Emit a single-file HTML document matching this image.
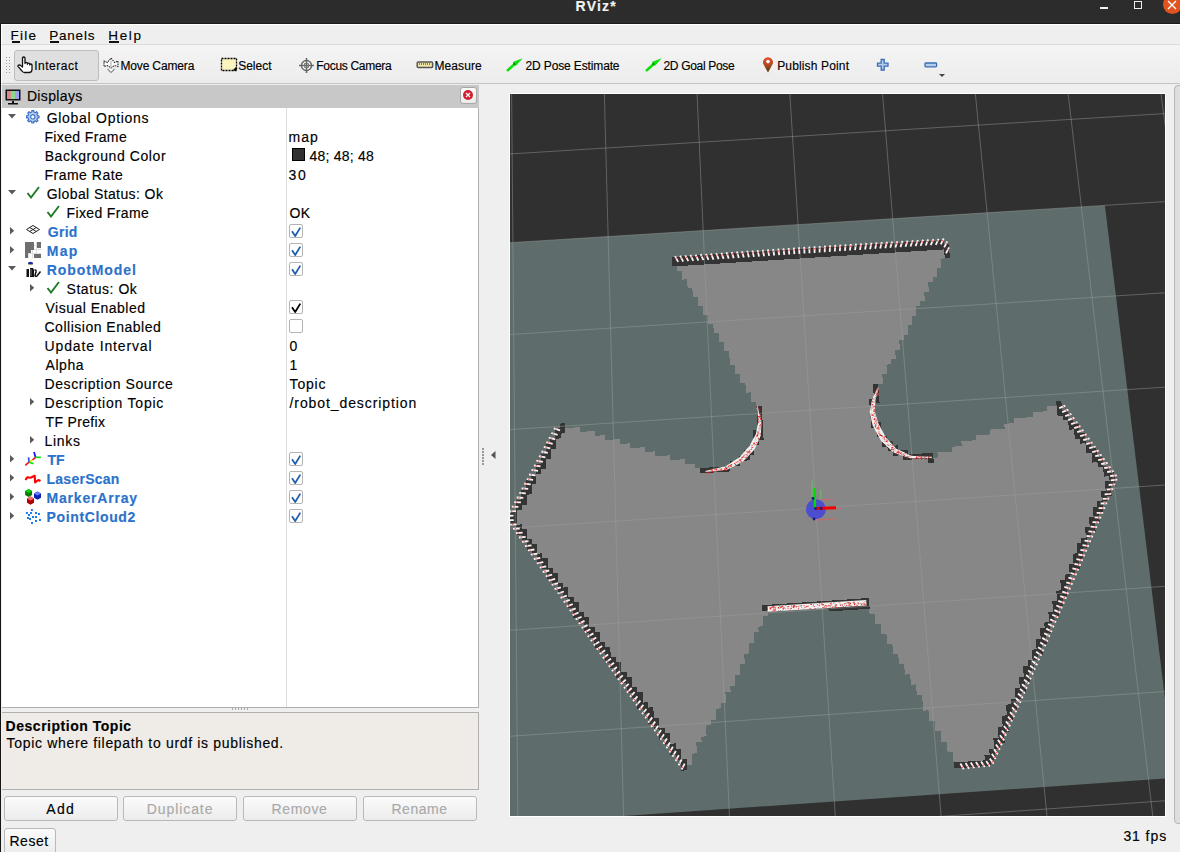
<!DOCTYPE html>
<html><head><meta charset="utf-8"><style>
*{margin:0;padding:0;box-sizing:border-box}
html,body{width:1180px;height:852px;overflow:hidden;background:#efefef;font-family:"Liberation Sans", sans-serif;color:#000;-webkit-text-stroke:0.15px currentColor}
.a{position:absolute;white-space:pre}
.tb{font-size:12px;line-height:16px}
.tr{font-size:14px;line-height:19px;height:19px}
.bl{color:#2b72ca;font-weight:bold}
.btn{position:absolute;height:25px;border:1px solid #b9b9b9;border-radius:3px;background:linear-gradient(#fbfbfb,#ececec);font-size:14px;line-height:23px;text-align:center;letter-spacing:0.5px}
.dis{color:#a9a9a9}
.cb{position:absolute;left:289px;width:14px;height:14px;border:1px solid #b4b4b4;border-radius:2px;background:#fff}
</style></head><body>
<div class="a" style="left:0;top:0;width:1180px;height:23px;background:#2c2c2c"></div>
<div class="a" style="left:0;top:23px;width:1180px;height:1px;background:#1a1a1a"></div>
<div class="a" style="left:575.60px;top:-1px;font-size:14px;font-weight:bold;color:#f2f2f2;line-height:14px;letter-spacing:1.175px">RViz*</div>

<div class="a" style="left:1100px;top:7px;width:8px;height:2px;background:#f0f0f0"></div>
<div class="a" style="left:1134px;top:1px;width:8px;height:8px;border:1.5px solid #f0f0f0"></div>
<div class="a" style="left:1163px;top:-5px;width:19px;height:19px;border-radius:50%;background:#e05220"></div>
<svg class="a" style="left:1166px;top:0" width="14" height="11"><path d="M2,1 L10,9 M10,1 L2,9" stroke="#fff" stroke-width="1.4"/></svg>
<div class="a" style="left:0;top:23px;width:1px;height:829px;background:#151515"></div>
<div class="a" style="left:1px;top:24px;width:1179px;height:21px;background:#efefef;border-top:1px solid #fff;border-left:1px solid #fff;border-bottom:1px solid #dadada"></div>
<div class="a" style="left:10.50px;top:27.5px;font-size:13.5px;line-height:16px;letter-spacing:1.267px">File</div>
<div class="a" style="left:11.5px;top:41px;width:8px;height:1.5px;background:#111"></div>
<div class="a" style="left:49.20px;top:27.5px;font-size:13.5px;line-height:16px;letter-spacing:0.800px">Panels</div>
<div class="a" style="left:50px;top:41px;width:9px;height:1.5px;background:#111"></div>
<div class="a" style="left:108.20px;top:27.5px;font-size:13.5px;line-height:16px;letter-spacing:1.700px">Help</div>
<div class="a" style="left:109px;top:41px;width:10px;height:1.5px;background:#111"></div>
<div class="a" style="left:1px;top:45px;width:1179px;height:39px;background:linear-gradient(#f4f4f4,#ececec);border-bottom:1px solid #c4c4c4;border-left:1px solid #fff"></div>
<div class="a" style="left:14px;top:50px;width:85px;height:31px;border:1px solid #bdbdbd;border-radius:3px;background:#dfdfdf"></div>
<div class="a" style="left:6px;top:57px;width:1px;height:1px;background:#9a9a9a"></div>
<div class="a" style="left:9px;top:57px;width:1px;height:1px;background:#9a9a9a"></div>
<div class="a" style="left:6px;top:60px;width:1px;height:1px;background:#9a9a9a"></div>
<div class="a" style="left:9px;top:60px;width:1px;height:1px;background:#9a9a9a"></div>
<div class="a" style="left:6px;top:63px;width:1px;height:1px;background:#9a9a9a"></div>
<div class="a" style="left:9px;top:63px;width:1px;height:1px;background:#9a9a9a"></div>
<div class="a" style="left:6px;top:66px;width:1px;height:1px;background:#9a9a9a"></div>
<div class="a" style="left:9px;top:66px;width:1px;height:1px;background:#9a9a9a"></div>
<div class="a" style="left:6px;top:69px;width:1px;height:1px;background:#9a9a9a"></div>
<div class="a" style="left:9px;top:69px;width:1px;height:1px;background:#9a9a9a"></div>
<div class="a" style="left:6px;top:72px;width:1px;height:1px;background:#9a9a9a"></div>
<div class="a" style="left:9px;top:72px;width:1px;height:1px;background:#9a9a9a"></div>
<div class="a tb" style="left:34.30px;top:58px;letter-spacing:0.486px">Interact</div>
<div class="a tb" style="left:120.40px;top:58px;letter-spacing:-0.140px">Move Camera</div>
<div class="a tb" style="left:238.20px;top:58px;letter-spacing:0.000px">Select</div>
<div class="a tb" style="left:316.30px;top:58px;letter-spacing:-0.300px">Focus Camera</div>
<div class="a tb" style="left:434.40px;top:58px;letter-spacing:0.100px">Measure</div>
<div class="a tb" style="left:525.50px;top:58px;letter-spacing:-0.133px">2D Pose Estimate</div>
<div class="a tb" style="left:663.40px;top:58px;letter-spacing:-0.309px">2D Goal Pose</div>
<div class="a tb" style="left:777.20px;top:58px;letter-spacing:0.150px">Publish Point</div>
<svg class="a" style="left:16px;top:56px" width="18" height="18"><path d="M6.5,11 V2.3 Q6.5,1 7.75,1 Q9,1 9,2.3 V7.5 Q9,6.3 10.2,6.3 Q11.4,6.3 11.4,7.5 V8.3 Q11.4,7.1 12.6,7.1 Q13.8,7.1 13.8,8.3 V9 Q13.8,8 14.9,8 Q16,8 16,9.2 V13.5 Q16,16.5 13,16.5 H8.5 Q7,16.5 6,15 L2.2,10.6 Q1.6,9.6 2.6,9.1 Q3.6,8.7 4.6,9.6 Z" fill="#fff" stroke="#111" stroke-width="1.3" stroke-linejoin="round"/></svg>
<svg class="a" style="left:103px;top:57px" width="16" height="16"><path d="M1,4 L4.5,5.5 L8,1 L11.5,5.5 L15,4 V9.5 L11.5,8.5 L8,11 L4.5,8.5 L1,9.5 Z" fill="#fff" stroke="#333" stroke-width="1.1" stroke-dasharray="1.6 0.8"/><path d="M8,4 V13" stroke="#bbb" stroke-width="1.3"/><path d="M4.5,12 L8,15.5 L11.5,12" fill="#fff" stroke="#888" stroke-width="1.1"/></svg>
<svg class="a" style="left:220px;top:57px" width="18" height="15"><rect x="1.5" y="1.5" width="15" height="12" fill="#fbf4bf" stroke="#000" stroke-width="1.3" stroke-dasharray="2 1"/><path d="M16.5,9.5 V13.5 H12.5 Z" fill="#000"/></svg>
<svg class="a" style="left:298px;top:57px" width="17" height="17"><circle cx="8.5" cy="8.5" r="5" fill="#fff" stroke="#666" stroke-width="1.4"/><path d="M8.5,1 V16 M1,8.5 H16" stroke="#666" stroke-width="1.6"/><path d="M6.5,6.5 h4 v4 h-4 z" fill="none" stroke="#777" stroke-width="1"/></svg>
<svg class="a" style="left:416px;top:61px" width="18" height="8"><rect x="1.2" y="1" width="15.4" height="5.6" rx="1" fill="#f0e6a8" stroke="#555" stroke-width="1.5"/><path d="M3.5,2 V4 M5.5,2 V4 M7.5,2 V4 M9.5,2 V4 M11.5,2 V4 M13.5,2 V4" stroke="#666" stroke-width="0.8"/></svg>
<svg class="a" style="left:506px;top:57px" width="18" height="15"><path d="M1.8,13.2 L8.5,7.2" stroke="#10e010" stroke-width="2.6" stroke-linecap="round"/><path d="M16.7,1.2 L9.9,9.1 L6.6,5.1 Z" fill="#10e010"/><circle cx="8.3" cy="7" r="1" fill="#0a6a0a"/></svg>
<svg class="a" style="left:644.5px;top:57px" width="18" height="15"><path d="M1.8,13.2 L8.5,7.2" stroke="#10e010" stroke-width="2.6" stroke-linecap="round"/><path d="M16.7,1.2 L9.9,9.1 L6.6,5.1 Z" fill="#10e010"/><circle cx="8.3" cy="7" r="1" fill="#0a6a0a"/></svg>
<svg class="a" style="left:762px;top:56px" width="12" height="17"><defs><linearGradient id="pg" x1="0" y1="0" x2="0" y2="1"><stop offset="0" stop-color="#e84c2c"/><stop offset="0.5" stop-color="#b04a22"/><stop offset="1" stop-color="#4a3210"/></linearGradient></defs><path d="M6,16.4 L1.6,8.6 A5,5 0 1 1 10.4,8.6 Z" fill="url(#pg)"/><circle cx="6" cy="5.6" r="1.8" fill="#fff"/></svg>
<svg class="a" style="left:876px;top:58px" width="14" height="14"><path d="M5.2,1.5 H8.2 V5.2 H12 V8.2 H8.2 V12 H5.2 V8.2 H1.5 V5.2 H5.2 Z" fill="#b4cdea" stroke="#3a6db5" stroke-width="1.3"/></svg>
<svg class="a" style="left:924px;top:62px" width="14" height="6"><rect x="1" y="1" width="11.6" height="3.8" rx="0.8" fill="#b4cdea" stroke="#3a6db5" stroke-width="1.3"/></svg>
<svg class="a" style="left:939px;top:74px" width="7" height="4"><path d="M0,0 H6 L3,3 Z" fill="#444"/></svg>
<div class="a" style="left:2px;top:85px;width:477px;height:23px;background:#c8c8c8"></div>
<svg class="a" style="left:5px;top:89px" width="16" height="16"><rect x="0.5" y="0.5" width="15" height="11" fill="#111"/><rect x="2" y="2" width="4" height="8" fill="#d98a8a"/><rect x="6" y="2" width="4" height="8" fill="#8ad98a"/><rect x="10" y="2" width="4" height="8" fill="#a0a0f0"/><rect x="7" y="12" width="2" height="2" fill="#111"/><rect x="3" y="14" width="10" height="1.5" fill="#111"/></svg>
<div class="a tr" style="left:26.90px;top:87px;letter-spacing:0.357px">Displays</div>
<div class="a" style="left:460px;top:87px;width:17px;height:17px;border:1px solid #a8a8a8;border-radius:3px;background:linear-gradient(#fdfdfd,#eaeaea)"></div>
<svg class="a" style="left:463px;top:90px" width="10" height="10"><circle cx="5" cy="5" r="5" fill="#d0202e"/><path d="M3,3 L7,7 M7,3 L3,7" stroke="#fff" stroke-width="1.2"/></svg>
<div class="a" style="left:2px;top:108px;width:477px;height:600px;background:#fff;border-right:1px solid #b0b0b0;border-bottom:1px solid #b0b0b0"></div>
<div class="a" style="left:286px;top:108px;width:1px;height:599px;background:#dcdcdc"></div>
<svg class="a" style="left:8px;top:114px" width="9" height="5"><path d="M0,0 H8 L4,4.5 Z" fill="#5a5a5a"/></svg>
<svg class="a" style="left:25.7px;top:109.7px" width="14" height="14"><path d="M11.60,5.83 L13.02,5.80 L13.02,7.80 L11.60,7.77 L10.88,9.51 L11.91,10.49 L10.49,11.91 L9.51,10.88 L7.77,11.60 L7.80,13.02 L5.80,13.02 L5.83,11.60 L4.09,10.88 L3.11,11.91 L1.69,10.49 L2.72,9.51 L2.00,7.77 L0.58,7.80 L0.58,5.80 L2.00,5.83 L2.72,4.09 L1.69,3.11 L3.11,1.69 L4.09,2.72 L5.83,2.00 L5.80,0.58 L7.80,0.58 L7.77,2.00 L9.51,2.72 L10.49,1.69 L11.91,3.11 L10.88,4.09 Z" fill="#bcd0ec" stroke="#3a72c8" stroke-width="1.2" stroke-linejoin="round"/><circle cx="6.8" cy="6.8" r="2.2" fill="#fff" stroke="#3a72c8" stroke-width="1.2"/></svg>
<div class="a tr" style="left:46.70px;top:109px;letter-spacing:0.715px">Global Options</div>
<div class="a tr" style="left:44.40px;top:128px;letter-spacing:0.370px">Fixed Frame</div>
<div class="a tr" style="left:288.40px;top:128px;letter-spacing:1.100px">map</div>
<div class="a tr" style="left:44.70px;top:147px;letter-spacing:0.587px">Background Color</div>
<div class="a" style="left:292px;top:148px;width:13px;height:13px;background:#303030;border:1px solid #000"></div>
<div class="a tr" style="left:309.40px;top:147px;letter-spacing:0.233px">48; 48; 48</div>
<div class="a tr" style="left:44.40px;top:166px;letter-spacing:0.511px">Frame Rate</div>
<div class="a tr" style="left:288.40px;top:166px;letter-spacing:1.700px">30</div>
<svg class="a" style="left:8px;top:190px" width="9" height="5"><path d="M0,0 H8 L4,4.5 Z" fill="#5a5a5a"/></svg>
<svg class="a" style="left:26px;top:186px" width="14" height="13"><path d="M1.5,7 L5,11.5 L13,1" fill="none" stroke="#1e7a22" stroke-width="1.9"/></svg>
<div class="a tr" style="left:46.70px;top:185px;letter-spacing:0.406px">Global Status: Ok</div>
<svg class="a" style="left:46px;top:205px" width="14" height="13"><path d="M1.5,7 L5,11.5 L13,1" fill="none" stroke="#1e7a22" stroke-width="1.9"/></svg>
<div class="a tr" style="left:66.50px;top:204px;letter-spacing:0.370px">Fixed Frame</div>
<div class="a tr" style="left:289.40px;top:204px;letter-spacing:0.400px">OK</div>
<svg class="a" style="left:10px;top:227px" width="5" height="8"><path d="M0,0 V7.5 L4.2,3.75 Z" fill="#5a5a5a"/></svg>
<svg class="a" style="left:26px;top:225px" width="14" height="10"><path d="M7,0.5 L13.5,4.5 L7,8.5 L0.5,4.5 Z M3.75,2.5 L10.25,6.5 M10.25,2.5 L3.75,6.5" fill="none" stroke="#222" stroke-width="1"/></svg>
<div class="a tr bl" style="left:47.70px;top:223px;letter-spacing:0.300px">Grid</div>
<div class="cb" style="top:224px"></div>
<svg class="a" style="left:291px;top:227px" width="11" height="11"><path d="M1,4.2 L4.2,9 L9.3,0.6" fill="none" stroke="#1f5fae" stroke-width="1.8" stroke-linejoin="round"/></svg>
<svg class="a" style="left:10px;top:246px" width="5" height="8"><path d="M0,0 V7.5 L4.2,3.75 Z" fill="#5a5a5a"/></svg>
<svg class="a" style="left:25px;top:242px" width="16" height="16"><rect width="16" height="16" fill="#fff"/><path d="M0,3.5H16M0,7.5H16M0,11.5H16M3.5,0V16M7.5,0V16M11.5,0V16" stroke="#ddd" stroke-width="1"/><path d="M0,0H9V8H6V11H3V16H0Z M12,0H16V6H12Z M9,12H16V16H9Z" fill="#6e6e6e"/></svg>
<div class="a tr bl" style="left:46.70px;top:242px;letter-spacing:1.300px">Map</div>
<div class="cb" style="top:243px"></div>
<svg class="a" style="left:291px;top:246px" width="11" height="11"><path d="M1,4.2 L4.2,9 L9.3,0.6" fill="none" stroke="#1f5fae" stroke-width="1.8" stroke-linejoin="round"/></svg>
<svg class="a" style="left:8px;top:266px" width="9" height="5"><path d="M0,0 H8 L4,4.5 Z" fill="#5a5a5a"/></svg>
<svg class="a" style="left:25px;top:261px" width="17" height="17"><ellipse cx="5.5" cy="2.3" rx="2.6" ry="1.6" fill="#1a2a9a"/><path d="M3,3.6 H8" stroke="#c8b070" stroke-width="0.8"/><path d="M1.5,8 H4 V16 H1.5 Z M5,7 H8 L9,9 V16 H5 Z" fill="#111"/><path d="M6,8 V15" stroke="#999" stroke-width="0.8"/><path d="M9.5,9 Q11.5,8.5 11,11 L10,14.5 Q10.5,16 12,15 L15.5,10.5" fill="none" stroke="#111" stroke-width="1.5"/></svg>
<div class="a tr bl" style="left:46.70px;top:261px;letter-spacing:0.922px">RobotModel</div>
<div class="cb" style="top:262px"></div>
<svg class="a" style="left:291px;top:265px" width="11" height="11"><path d="M1,4.2 L4.2,9 L9.3,0.6" fill="none" stroke="#1f5fae" stroke-width="1.8" stroke-linejoin="round"/></svg>
<svg class="a" style="left:30px;top:284px" width="5" height="8"><path d="M0,0 V7.5 L4.2,3.75 Z" fill="#5a5a5a"/></svg>
<svg class="a" style="left:46px;top:281px" width="14" height="13"><path d="M1.5,7 L5,11.5 L13,1" fill="none" stroke="#1e7a22" stroke-width="1.9"/></svg>
<div class="a tr" style="left:66.50px;top:280px;letter-spacing:0.556px">Status: Ok</div>
<div class="a tr" style="left:45.50px;top:299px;letter-spacing:0.485px">Visual Enabled</div>
<div class="cb" style="top:300px"></div>
<svg class="a" style="left:291px;top:303px" width="11" height="11"><path d="M1,4.2 L4.2,9 L9.3,0.6" fill="none" stroke="#000" stroke-width="1.8" stroke-linejoin="round"/></svg>
<div class="a tr" style="left:44.50px;top:318px;letter-spacing:0.506px">Collision Enabled</div>
<div class="cb" style="top:319px"></div>
<div class="a tr" style="left:44.50px;top:337px;letter-spacing:0.871px">Update Interval</div>
<div class="a tr" style="left:289.60px;top:337px;letter-spacing:0.000px">0</div>
<div class="a tr" style="left:45.50px;top:356px;letter-spacing:0.550px">Alpha</div>
<div class="a tr" style="left:289.50px;top:356px;letter-spacing:0.000px">1</div>
<div class="a tr" style="left:44.50px;top:375px;letter-spacing:0.594px">Description Source</div>
<div class="a tr" style="left:289.60px;top:375px;letter-spacing:0.800px">Topic</div>
<svg class="a" style="left:30px;top:398px" width="5" height="8"><path d="M0,0 V7.5 L4.2,3.75 Z" fill="#5a5a5a"/></svg>
<div class="a tr" style="left:44.50px;top:394px;letter-spacing:0.781px">Description Topic</div>
<div class="a tr" style="left:289.50px;top:394px;letter-spacing:0.912px">/robot_description</div>
<div class="a tr" style="left:45.50px;top:413px;letter-spacing:0.338px">TF Prefix</div>
<svg class="a" style="left:30px;top:436px" width="5" height="8"><path d="M0,0 V7.5 L4.2,3.75 Z" fill="#5a5a5a"/></svg>
<div class="a tr" style="left:44.50px;top:432px;letter-spacing:0.675px">Links</div>
<svg class="a" style="left:10px;top:455px" width="5" height="8"><path d="M0,0 V7.5 L4.2,3.75 Z" fill="#5a5a5a"/></svg>
<svg class="a" style="left:22px;top:450px" width="20" height="17"><path d="M3.3,15.3 L7,12.2" stroke="#ff1010" stroke-width="1.7"/><path d="M7,12.2 L10.5,9.8" stroke="#e8e000" stroke-width="1.5"/><path d="M10.5,9.8 L13.6,7.3" stroke="#ff1010" stroke-width="1.7"/><path d="M7,12.2 L6.6,7.3" stroke="#3050ff" stroke-width="1.7"/><path d="M7,12.2 L11.5,13.6" stroke="#10e010" stroke-width="1.7"/><path d="M13.6,7.3 L12,2.1" stroke="#1010ff" stroke-width="1.7"/><path d="M13.6,7.3 L18.8,7.3" stroke="#10e010" stroke-width="1.7"/></svg>
<div class="a tr bl" style="left:47.50px;top:451px;letter-spacing:-0.100px">TF</div>
<div class="cb" style="top:452px"></div>
<svg class="a" style="left:291px;top:455px" width="11" height="11"><path d="M1,4.2 L4.2,9 L9.3,0.6" fill="none" stroke="#1f5fae" stroke-width="1.8" stroke-linejoin="round"/></svg>
<svg class="a" style="left:10px;top:474px" width="5" height="8"><path d="M0,0 V7.5 L4.2,3.75 Z" fill="#5a5a5a"/></svg>
<svg class="a" style="left:22px;top:473px" width="20" height="12"><path d="M3.5,7 L5.2,4.2 L8.5,4.7 L12.7,2.8 L13.1,9.4 L16.4,7 L18.5,8" fill="none" stroke="#ff0000" stroke-width="2.1" stroke-linejoin="round"/></svg>
<div class="a tr bl" style="left:46.50px;top:470px;letter-spacing:0.262px">LaserScan</div>
<div class="cb" style="top:471px"></div>
<svg class="a" style="left:291px;top:474px" width="11" height="11"><path d="M1,4.2 L4.2,9 L9.3,0.6" fill="none" stroke="#1f5fae" stroke-width="1.8" stroke-linejoin="round"/></svg>
<svg class="a" style="left:10px;top:493px" width="5" height="8"><path d="M0,0 V7.5 L4.2,3.75 Z" fill="#5a5a5a"/></svg>
<svg class="a" style="left:22px;top:487px" width="20" height="20"><path d="M3.1000000000000014,3.8999999999999773 L6.600000000000001,1.8999999999999773 L10.100000000000001,3.8999999999999773 V8.099999999999977 L6.600000000000001,10.099999999999977 L3.1000000000000014,8.099999999999977 Z" fill="#0a7a0a"/><path d="M3.1000000000000014,3.8999999999999773 L6.600000000000001,1.8999999999999773 L10.100000000000001,3.8999999999999773 L6.600000000000001,5.899999999999977 Z" fill="#10d010"/><path d="M12.0,6.5 L15.5,4.5 L19.0,6.5 V10.7 L15.5,12.7 L12.0,10.7 Z" fill="#1020b0"/><path d="M12.0,6.5 L15.5,4.5 L19.0,6.5 L15.5,8.5 Z" fill="#6a80ff"/><path d="M5.0,11.600000000000023 L8.5,9.600000000000023 L12.0,11.600000000000023 V15.800000000000022 L8.5,17.800000000000022 L5.0,15.800000000000022 Z" fill="#b00000"/><path d="M5.0,11.600000000000023 L8.5,9.600000000000023 L12.0,11.600000000000023 L8.5,13.600000000000023 Z" fill="#ff6a6a"/></svg>
<div class="a tr bl" style="left:46.50px;top:489px;letter-spacing:0.810px">MarkerArray</div>
<div class="cb" style="top:490px"></div>
<svg class="a" style="left:291px;top:493px" width="11" height="11"><path d="M1,4.2 L4.2,9 L9.3,0.6" fill="none" stroke="#1f5fae" stroke-width="1.8" stroke-linejoin="round"/></svg>
<svg class="a" style="left:10px;top:512px" width="5" height="8"><path d="M0,0 V7.5 L4.2,3.75 Z" fill="#5a5a5a"/></svg>
<svg class="a" style="left:22px;top:507px" width="20" height="20"><rect x="8.9" y="2.0" width="2" height="2" fill="#1a7ef0"/><rect x="3.9" y="5.0" width="2" height="2" fill="#1a7ef0"/><rect x="8.0" y="5.0" width="2" height="2" fill="#1a7ef0"/><rect x="13.0" y="5.0" width="2" height="2" fill="#1a7ef0"/><rect x="16.0" y="6.0" width="2" height="2" fill="#1a7ef0"/><rect x="6.0" y="7.0" width="2" height="2" fill="#1a7ef0"/><rect x="10.0" y="9.0" width="2" height="2" fill="#1a7ef0"/><rect x="13.0" y="9.0" width="2" height="2" fill="#1a7ef0"/><rect x="5.0" y="10.0" width="2" height="2" fill="#1a7ef0"/><rect x="7.0" y="11.0" width="2" height="2" fill="#1a7ef0"/><rect x="13.0" y="13.0" width="2" height="2" fill="#1a7ef0"/><rect x="17.0" y="12.0" width="2" height="2" fill="#1a7ef0"/><rect x="9.0" y="15.0" width="2" height="2" fill="#1a7ef0"/></svg>
<div class="a tr bl" style="left:46.50px;top:508px;letter-spacing:0.640px">PointCloud2</div>
<div class="cb" style="top:509px"></div>
<svg class="a" style="left:291px;top:512px" width="11" height="11"><path d="M1,4.2 L4.2,9 L9.3,0.6" fill="none" stroke="#1f5fae" stroke-width="1.8" stroke-linejoin="round"/></svg>
<div class="a" style="left:232px;top:708px;width:16px;height:2px;background:repeating-linear-gradient(90deg,#aaa 0 1px,transparent 1px 3px)"></div>
<div class="a" style="left:2px;top:712px;width:477px;height:78px;background:#efebe7;border:1px solid #b0b0b0;border-left:none"></div>
<div class="a" style="left:5.60px;top:718px;font-size:14px;line-height:17px;font-weight:bold;letter-spacing:0.519px">Description Topic</div>
<div class="a" style="left:6.60px;top:735px;font-size:14px;line-height:17px;letter-spacing:0.673px">Topic where filepath to urdf is published.</div>
<div class="btn" style="left:3.5px;top:796px;width:114px"></div>
<div class="a" style="left:46.30px;top:800.5px;font-size:14px;line-height:17px;letter-spacing:1.350px">Add</div>
<div class="btn" style="left:123px;top:796px;width:114px"></div>
<div class="a dis" style="left:146.70px;top:800.5px;font-size:14px;line-height:17px;letter-spacing:0.925px">Duplicate</div>
<div class="btn" style="left:243.3px;top:796px;width:114px"></div>
<div class="a dis" style="left:271.60px;top:800.5px;font-size:14px;line-height:17px;letter-spacing:0.620px">Remove</div>
<div class="btn" style="left:363.1px;top:796px;width:114px"></div>
<div class="a dis" style="left:391.40px;top:800.5px;font-size:14px;line-height:17px;letter-spacing:0.560px">Rename</div>
<div class="btn" style="left:3.5px;top:828px;width:52px;height:26px"></div>
<div class="a" style="left:9.50px;top:832.5px;font-size:14px;line-height:17px;letter-spacing:0.500px">Reset</div>
<div class="a" style="left:1123.40px;top:828px;font-size:14px;line-height:17px;letter-spacing:0.920px">31 fps</div>
<div class="a" style="left:482px;top:448px;width:1.5px;height:1.5px;background:#999"></div>
<div class="a" style="left:482px;top:451px;width:1.5px;height:1.5px;background:#999"></div>
<div class="a" style="left:482px;top:454px;width:1.5px;height:1.5px;background:#999"></div>
<div class="a" style="left:482px;top:457px;width:1.5px;height:1.5px;background:#999"></div>
<div class="a" style="left:482px;top:460px;width:1.5px;height:1.5px;background:#999"></div>
<div class="a" style="left:482px;top:463px;width:1.5px;height:1.5px;background:#999"></div>
<svg class="a" style="left:491px;top:451px" width="5" height="8"><path d="M4.5,0 V8 L0,4 Z" fill="#555"/></svg>
<div class="a" style="left:1174px;top:85px;width:12px;height:739px;border:1px solid #b5b5b5;border-radius:4px;background:#dedede"></div>
<div class="a" style="left:509px;top:93px;width:657px;height:724px;background:#fff"></div>
<svg width="655" height="722" viewBox="510 94 655 722" style="position:absolute;left:510px;top:94px;display:block">
<rect x="510" y="94" width="655" height="722" fill="#303030"/>
<polygon points="226.0,260.5 1104.9,205.4 1174.6,777.9 199.2,845.4" fill="#5e6d6b"/>
<path d="M676.9,261.3 720.3,258.6 720.5,263.5 677.1,266.2ZM677.1,265.9 944.4,249.0 944.8,253.9 677.3,270.8ZM682.1,270.1 944.8,253.5 945.2,258.4 682.3,275.0ZM682.2,274.7 940.4,258.4 940.9,263.3 682.4,279.6ZM687.2,278.9 940.8,262.9 941.3,267.8 687.4,283.9ZM687.4,283.5 936.5,267.8 936.9,272.7 687.6,288.5ZM692.4,287.8 936.9,272.3 937.3,277.2 692.6,292.7ZM692.6,292.4 932.5,277.2 932.9,282.1 692.8,297.4ZM697.6,296.7 928.1,282.1 928.5,287.0 697.8,301.7ZM697.8,301.3 928.5,286.6 928.9,291.6 698.0,306.3ZM702.8,305.6 924.1,291.5 924.5,296.5 703.0,310.6ZM703.0,310.2 924.5,296.1 924.9,301.1 703.2,315.2ZM708.0,314.5 920.1,301.0 920.5,306.0 708.3,319.6ZM708.2,319.2 915.7,306.0 916.1,311.0 708.5,324.2ZM713.3,323.5 916.1,310.6 916.5,315.6 713.5,328.5ZM713.5,328.2 911.7,315.5 912.1,320.5 713.7,333.2ZM718.6,332.5 912.1,320.2 912.5,325.2 718.8,337.6ZM718.8,337.2 907.6,325.1 908.0,330.2 719.0,342.3ZM723.8,341.6 908.0,329.8 908.4,334.8 724.1,346.6ZM724.1,346.3 903.6,334.8 904.0,339.8 724.3,351.3ZM729.1,350.6 899.1,339.8 899.5,344.8 729.4,355.7ZM729.4,355.3 899.5,344.4 899.9,349.5 729.6,360.4ZM729.6,360.0 895.0,349.4 895.4,354.5 729.8,365.1ZM734.7,364.5 895.4,354.1 895.8,359.2 734.9,369.6ZM734.9,369.2 890.9,359.2 891.3,364.3 735.2,374.3ZM740.0,373.6 886.4,364.2 886.8,369.3 740.3,378.7ZM740.3,378.3 886.8,368.9 887.2,374.0 740.5,383.5ZM745.4,382.8 882.3,374.0 882.7,379.1 745.7,387.9ZM745.6,387.5 882.6,378.7 883.0,383.8 745.9,392.7ZM750.8,392.0 878.1,383.8 878.5,388.9 751.0,397.1ZM751.0,396.8 878.5,388.5 878.9,393.7 751.3,401.9ZM756.2,401.2 874.0,393.6 874.4,398.8 756.4,406.4ZM756.4,406.0 874.3,398.4 874.7,403.6 756.7,411.2ZM560.0,423.6 565.3,423.2 565.4,428.4 560.1,428.8ZM756.7,410.8 874.7,403.2 875.1,408.4 757.0,416.0ZM560.1,428.4 580.2,427.1 580.3,432.3 560.1,433.6ZM756.9,415.6 870.1,408.3 870.5,413.5 757.2,420.8ZM555.2,433.5 595.1,431.0 595.2,436.2 555.3,438.8ZM757.2,420.4 875.4,412.8 875.8,418.0 757.5,425.7ZM550.3,438.7 605.1,435.2 605.2,440.4 550.4,444.0ZM757.5,425.3 875.8,417.6 876.2,422.8 757.7,430.5ZM1046.8,406.5 1061.8,405.5 1062.4,410.7 1047.3,411.7ZM550.4,443.6 620.0,439.1 620.2,444.3 550.5,448.8ZM757.7,430.1 876.1,422.4 876.5,427.6 758.0,435.3ZM1032.6,412.2 1062.4,410.3 1062.9,415.5 1033.2,417.4ZM545.5,448.8 630.0,443.3 630.2,448.5 545.6,454.0ZM758.0,434.9 876.5,427.2 876.9,432.5 758.2,440.2ZM1013.5,418.3 1067.8,414.8 1068.4,420.0 1014.0,423.5ZM545.6,453.6 645.0,447.2 645.2,452.4 545.7,458.9ZM753.3,440.1 881.8,431.8 882.2,437.0 753.6,445.4ZM1004.2,423.8 1073.2,419.3 1073.8,424.5 1004.7,429.0ZM540.7,458.8 655.1,451.4 655.2,456.7 540.8,464.1ZM753.5,445.0 882.1,436.6 882.5,441.8 753.8,450.2ZM989.9,429.6 1073.8,424.1 1074.3,429.3 990.4,434.8ZM540.8,463.7 670.1,455.3 670.3,460.6 540.8,469.0ZM748.9,450.2 887.4,441.1 887.8,446.4 749.1,455.4ZM975.7,435.4 1079.2,428.6 1079.8,433.9 976.1,440.6ZM535.9,469.0 685.1,459.2 685.3,464.5 535.9,474.3ZM744.2,455.4 892.7,445.7 893.1,450.9 744.4,460.6ZM961.3,441.2 1079.7,433.5 1080.3,438.7 961.8,446.5ZM535.9,473.9 695.2,463.5 695.5,468.8 536.0,479.2ZM734.5,460.9 898.1,450.2 898.5,455.5 734.8,466.2ZM951.9,446.7 1085.2,438.0 1085.8,443.3 952.4,452.0ZM531.0,479.1 705.4,467.7 705.6,473.0 531.1,484.4ZM719.9,466.8 908.3,454.5 908.7,459.7 720.1,472.1ZM937.5,452.5 1085.7,442.9 1086.3,448.1 938.0,457.8ZM526.1,484.4 1091.2,447.4 1091.8,452.7 526.1,489.7ZM526.1,489.3 1096.7,452.0 1097.3,457.2 526.2,494.7ZM521.2,494.6 1097.3,456.8 1097.9,462.1 521.2,499.9ZM521.2,499.5 1102.8,461.4 1103.4,466.7 521.3,504.9ZM516.3,504.8 1103.3,466.3 1103.9,471.6 516.3,510.2ZM516.3,509.8 1108.8,470.9 1109.5,476.2 516.4,515.2ZM511.3,515.1 1109.4,475.8 1110.0,481.1 511.4,520.5ZM516.4,519.8 1110.0,480.7 1110.6,486.1 516.5,525.2ZM516.4,524.8 1105.6,486.0 1106.2,491.3 516.5,530.2ZM521.5,529.5 1106.2,490.9 1106.8,496.3 521.6,534.9ZM526.6,534.2 1101.8,496.2 1102.4,501.6 526.7,539.6ZM526.7,539.2 1102.4,501.2 1103.0,506.5 526.7,544.6ZM531.7,543.9 1097.9,506.5 1098.6,511.9 531.8,549.3ZM536.8,548.6 1098.5,511.5 1099.1,516.8 536.9,554.1ZM536.9,553.7 1094.1,516.8 1094.7,522.2 537.0,559.1ZM542.0,558.4 1094.7,521.8 1095.3,527.2 542.1,563.9ZM547.1,563.1 1090.2,527.1 1090.8,532.5 547.2,568.6ZM547.2,568.2 1090.8,532.1 1091.4,537.6 547.3,573.7ZM552.4,573.0 1086.4,537.5 1087.0,542.9 552.4,578.5ZM557.5,577.7 1086.9,542.5 1087.5,548.0 557.6,583.2ZM557.6,582.8 1082.5,547.9 1083.1,553.4 557.7,588.3ZM562.7,587.6 1083.0,553.0 1083.6,558.4 562.8,593.1ZM567.9,592.4 1078.6,558.4 1079.2,563.8 568.0,597.9ZM568.0,597.5 1074.1,563.8 1074.7,569.3 568.1,603.1ZM573.2,602.3 1074.6,568.8 1075.2,574.3 573.3,607.9ZM578.4,607.1 1070.2,574.3 1070.7,579.8 578.5,612.7ZM578.5,612.3 1070.7,579.4 1071.3,584.9 578.6,617.9ZM583.7,617.1 1066.2,584.8 1066.8,590.4 583.8,622.7ZM588.9,622.0 767.7,610.0 768.0,615.6 589.0,627.6ZM848.6,604.6 1066.8,590.0 1067.3,595.5 848.9,610.1ZM589.0,627.2 762.9,615.5 763.1,621.1 589.1,632.8ZM869.2,608.4 1062.2,595.4 1062.8,601.0 869.6,613.9ZM594.2,632.0 763.1,620.7 763.4,626.3 594.4,637.6ZM874.7,613.2 1057.7,600.9 1058.3,606.5 875.1,618.8ZM599.5,636.9 758.3,626.2 758.6,631.8 599.6,642.5ZM875.1,618.4 1058.3,606.1 1058.8,611.6 875.5,624.0ZM599.6,642.1 753.5,631.7 753.7,637.4 599.7,647.7ZM880.5,623.2 1053.7,611.6 1054.3,617.1 880.9,628.8ZM604.8,647.0 753.7,636.9 754.0,642.6 605.0,652.6ZM880.9,628.4 1054.3,616.7 1054.9,622.3 881.3,634.0ZM610.1,651.9 748.9,642.5 749.1,648.2 610.2,657.5ZM886.4,633.2 1049.7,622.2 1050.3,627.9 886.8,638.9ZM610.2,657.1 749.1,647.7 749.4,653.4 610.4,662.8ZM886.8,638.5 1050.3,627.4 1050.8,633.1 887.2,644.1ZM615.5,662.0 744.3,653.3 744.5,659.0 615.6,667.7ZM892.3,643.3 1045.7,633.0 1046.3,638.6 892.7,649.0ZM620.8,666.9 744.5,658.6 744.8,664.2 620.9,672.6ZM892.7,648.6 1041.1,638.5 1041.7,644.2 893.1,654.2ZM620.9,672.2 739.6,664.2 739.9,669.9 621.1,677.9ZM898.2,653.5 1041.7,643.8 1042.2,649.4 898.6,659.1ZM626.2,677.1 739.9,669.4 740.2,675.1 626.4,682.8ZM898.6,658.7 1037.1,649.3 1037.7,655.0 899.0,664.4ZM631.5,682.1 735.0,675.1 735.3,680.8 631.7,687.8ZM904.1,663.6 1037.6,654.6 1038.2,660.2 904.5,669.3ZM631.7,687.4 735.2,680.3 735.5,686.1 631.8,693.1ZM904.5,668.9 1033.0,660.2 1033.6,665.9 904.9,674.6ZM637.0,692.3 730.3,686.0 730.6,691.7 637.2,698.1ZM910.0,673.8 1028.4,665.8 1029.0,671.5 910.5,679.5ZM642.3,697.3 725.4,691.7 725.7,697.4 642.5,703.0ZM910.5,679.1 1028.9,671.0 1029.5,676.8 910.9,684.8ZM642.5,702.6 725.7,697.0 725.9,702.7 642.7,708.4ZM916.0,684.0 1024.3,676.7 1024.9,682.4 916.5,689.8ZM647.8,707.6 720.7,702.7 721.0,708.4 648.0,713.4ZM916.4,689.3 1024.9,682.0 1025.4,687.7 916.9,695.1ZM653.2,712.6 715.8,708.3 716.0,714.1 653.4,718.4ZM922.0,694.3 1020.2,687.6 1020.8,693.4 922.5,700.1ZM653.4,718.0 716.0,713.7 716.3,719.5 653.5,723.8ZM922.4,699.6 1020.7,692.9 1021.3,698.7 922.9,705.4ZM658.7,723.0 711.1,719.4 711.3,725.2 658.9,728.8ZM922.8,705.0 1016.1,698.6 1016.7,704.4 923.3,710.7ZM664.1,728.0 706.1,725.1 706.3,730.9 664.3,733.8ZM928.4,710.0 1011.5,704.3 1012.0,710.1 928.9,715.7ZM664.3,733.4 706.3,730.5 706.6,736.3 664.5,739.2ZM928.9,715.3 1012.0,709.6 1012.5,715.4 929.3,721.1ZM669.7,738.4 701.3,736.3 701.6,742.1 669.9,744.3ZM934.5,720.3 1007.3,715.3 1007.8,721.1 934.9,726.1ZM675.1,743.5 696.3,742.0 696.6,747.9 675.3,749.3ZM934.9,725.7 1007.8,720.7 1008.4,726.5 935.4,731.5ZM675.3,748.9 696.6,747.4 696.8,753.3 675.5,754.7ZM940.5,730.7 1003.1,726.4 1003.7,732.2 941.0,736.5ZM680.7,753.9 691.5,753.2 691.8,759.1 680.9,759.8ZM941.0,736.1 998.5,732.2 999.0,738.0 941.5,741.9ZM686.1,759.0 691.8,758.6 692.0,764.5 686.3,764.9ZM946.6,741.2 998.9,737.6 999.5,743.4 947.1,747.0ZM947.1,746.6 994.3,743.3 994.8,749.2 947.6,752.4ZM952.7,751.6 994.7,748.7 995.3,754.6 953.2,757.5ZM953.2,757.1 990.0,754.5 990.6,760.4 953.7,762.9Z" fill="#878787" shape-rendering="crispEdges"/>
<path d="M672.0,257.1 943.5,240.0 944.0,244.8 672.2,262.0ZM672.1,261.6 948.7,244.2 949.1,249.1 672.3,266.5ZM944.0,249.0 949.1,248.7 949.6,253.6 944.4,253.9ZM944.4,253.5 949.5,253.2 950.0,258.1 944.8,258.4ZM872.9,384.1 878.1,383.8 878.5,388.9 873.3,389.3ZM873.2,388.9 878.5,388.5 878.9,393.7 873.6,394.0ZM873.6,393.6 878.9,393.3 879.2,398.5 874.0,398.8ZM756.4,406.0 761.7,405.7 762.0,410.9 756.7,411.2ZM869.0,398.7 879.2,398.1 879.6,403.2 869.4,403.9ZM560.0,423.6 565.3,423.2 565.4,428.4 560.1,428.8ZM756.7,410.8 762.0,410.5 762.3,415.7 757.0,416.0ZM869.4,403.5 874.7,403.2 875.1,408.4 869.8,408.7ZM555.1,428.7 565.4,428.0 565.5,433.3 555.2,433.9ZM756.9,415.6 762.2,415.3 762.5,420.5 757.2,420.8ZM869.8,408.3 875.0,408.0 875.4,413.2 870.1,413.5ZM555.2,433.5 560.5,433.2 560.6,438.4 555.3,438.8ZM757.2,420.4 762.5,420.1 762.8,425.3 757.5,425.7ZM870.1,413.1 875.4,412.8 875.8,418.0 870.5,418.3ZM1056.0,401.1 1061.3,400.7 1061.9,405.9 1056.6,406.2ZM550.3,438.7 555.7,438.4 555.8,443.6 550.4,444.0ZM757.5,425.3 762.8,424.9 763.0,430.1 757.7,430.5ZM870.5,417.9 875.8,417.6 876.2,422.8 870.9,423.1ZM1056.6,405.9 1061.8,405.5 1062.4,410.7 1057.1,411.0ZM545.5,443.9 555.7,443.2 555.8,448.5 545.5,449.1ZM752.8,430.4 763.0,429.8 763.3,435.0 753.1,435.7ZM870.8,422.8 881.0,422.1 881.4,427.3 871.2,428.0ZM1057.1,410.7 1067.3,410.0 1067.8,415.2 1057.6,415.8ZM545.5,448.8 550.9,448.4 551.0,453.7 545.6,454.0ZM753.0,435.3 763.3,434.6 763.6,439.8 753.3,440.5ZM876.1,427.3 881.4,426.9 881.8,432.1 876.5,432.5ZM1062.5,415.1 1067.8,414.8 1068.4,420.0 1063.1,420.3ZM540.6,454.0 550.9,453.3 551.0,458.6 540.7,459.2ZM753.3,440.1 758.6,439.8 758.9,445.0 753.6,445.4ZM876.5,432.1 881.8,431.8 882.2,437.0 876.9,437.3ZM1067.9,419.6 1073.2,419.3 1073.8,424.5 1068.5,424.9ZM540.7,458.8 546.1,458.5 546.1,463.8 540.8,464.1ZM748.6,445.3 753.9,445.0 754.2,450.2 748.9,450.6ZM881.7,436.6 887.1,436.3 887.5,441.5 882.1,441.9ZM1068.5,424.5 1078.7,423.8 1079.2,429.0 1069.0,429.7ZM535.8,464.1 546.1,463.4 546.2,468.7 535.9,469.4ZM743.9,450.5 754.2,449.8 754.5,455.1 744.2,455.8ZM882.1,441.5 892.4,440.8 892.8,446.1 882.5,446.7ZM1073.9,429.0 1079.2,428.6 1079.8,433.9 1074.5,434.2ZM535.9,469.0 541.2,468.6 541.3,473.9 535.9,474.3ZM739.2,455.7 749.5,455.0 749.8,460.3 739.5,461.0ZM887.4,446.0 897.7,445.4 898.1,450.6 887.8,451.3ZM1074.4,433.8 1084.6,433.2 1085.2,438.4 1075.0,439.1ZM530.9,474.2 536.3,473.8 536.4,479.2 531.0,479.5ZM729.5,461.2 739.8,460.6 740.1,465.8 729.8,466.5ZM892.7,450.6 907.9,449.6 908.3,454.8 893.1,455.8ZM1079.9,438.4 1085.2,438.0 1085.8,443.3 1080.5,443.6ZM526.0,479.4 536.4,478.8 536.4,484.1 526.1,484.8ZM700.0,468.1 730.2,466.1 730.4,471.4 700.2,473.4ZM903.0,454.8 933.0,452.8 933.4,458.1 903.4,460.1ZM1085.4,442.9 1090.7,442.5 1091.3,447.8 1085.9,448.1ZM526.1,484.4 531.5,484.0 531.5,489.4 526.1,489.7ZM928.1,458.1 933.4,457.7 933.9,463.0 928.5,463.4ZM1085.9,447.8 1096.1,447.1 1096.7,452.3 1086.5,453.0ZM521.1,489.6 531.5,489.0 531.6,494.3 521.2,495.0ZM1091.4,452.3 1096.7,452.0 1097.3,457.2 1092.0,457.6ZM521.2,494.6 526.6,494.2 526.6,499.6 521.2,499.9ZM1091.9,457.2 1102.2,456.5 1102.8,461.8 1092.5,462.5ZM516.2,499.9 526.6,499.2 526.7,504.5 516.3,505.2ZM1097.4,461.8 1102.8,461.4 1103.4,466.7 1098.0,467.0ZM516.3,504.8 521.7,504.5 521.7,509.9 516.3,510.2ZM1102.9,466.3 1108.3,466.0 1108.9,471.3 1103.5,471.6ZM511.3,510.1 516.7,509.8 516.8,515.2 511.3,515.5ZM1103.5,471.2 1113.8,470.6 1114.4,475.9 1104.1,476.6ZM506.3,515.5 516.8,514.8 516.8,520.2 506.4,520.8ZM1109.0,475.8 1114.4,475.5 1115.0,480.8 1109.6,481.2ZM511.4,520.1 516.8,519.8 516.9,525.2 511.4,525.5ZM1104.6,481.1 1114.9,480.4 1115.6,485.7 1105.3,486.4ZM516.4,524.8 521.9,524.4 521.9,529.8 516.5,530.2ZM1105.2,486.0 1110.6,485.7 1111.2,491.0 1105.8,491.4ZM516.5,529.8 526.9,529.1 527.0,534.5 516.5,535.2ZM1100.8,491.3 1111.1,490.6 1111.8,496.0 1101.4,496.6ZM521.6,534.5 527.0,534.1 527.1,539.6 521.6,539.9ZM1101.4,496.2 1106.7,495.9 1107.4,501.2 1102.0,501.6ZM526.7,539.2 532.1,538.8 532.2,544.3 526.7,544.6ZM1097.0,501.5 1102.4,501.2 1103.0,506.5 1097.6,506.9ZM526.7,544.2 537.2,543.5 537.3,549.0 526.8,549.7ZM1092.6,506.8 1102.9,506.1 1103.5,511.5 1093.2,512.2ZM531.8,548.9 537.2,548.6 537.3,554.0 531.9,554.4ZM1093.1,511.8 1098.5,511.5 1099.1,516.8 1093.7,517.2ZM536.9,553.7 542.4,553.3 542.4,558.8 537.0,559.1ZM1088.7,517.1 1099.1,516.4 1099.7,521.8 1089.3,522.5ZM537.0,558.7 547.5,558.0 547.6,563.5 537.0,564.2ZM1089.3,522.1 1094.7,521.8 1095.3,527.2 1089.9,527.5ZM542.1,563.5 547.5,563.1 547.6,568.6 542.2,568.9ZM1084.8,527.5 1095.2,526.8 1095.8,532.2 1085.4,532.9ZM547.2,568.2 552.7,567.8 552.8,573.3 547.3,573.7ZM1085.4,532.5 1090.8,532.1 1091.4,537.6 1086.0,537.9ZM547.3,573.3 557.8,572.6 557.9,578.1 547.4,578.8ZM1081.0,537.8 1086.4,537.5 1087.0,542.9 1081.6,543.3ZM552.4,578.1 557.9,577.7 558.0,583.2 552.5,583.6ZM1076.5,543.2 1086.9,542.5 1087.5,548.0 1077.1,548.7ZM557.6,582.8 563.1,582.5 563.2,588.0 557.7,588.3ZM1077.1,548.3 1082.5,547.9 1083.1,553.4 1077.6,553.7ZM557.7,587.9 568.2,587.2 568.3,592.8 557.7,593.5ZM1072.6,553.7 1083.0,553.0 1083.6,558.4 1073.2,559.1ZM562.8,592.7 568.3,592.4 568.4,597.9 562.9,598.3ZM1073.1,558.7 1078.6,558.4 1079.2,563.8 1073.7,564.2ZM568.0,597.5 573.5,597.2 573.6,602.7 568.1,603.1ZM1068.7,564.1 1079.1,563.4 1079.7,568.9 1069.2,569.6ZM568.1,602.7 578.7,602.0 578.8,607.5 568.2,608.2ZM1069.2,569.2 1074.6,568.8 1075.2,574.3 1069.8,574.7ZM573.3,607.5 578.8,607.1 578.9,612.7 573.4,613.1ZM1064.7,574.6 1070.2,574.3 1070.7,579.8 1065.3,580.2ZM573.4,612.6 584.0,611.9 584.1,617.5 573.5,618.2ZM1060.2,580.1 1070.7,579.4 1071.3,584.9 1060.8,585.6ZM578.6,617.5 589.2,616.8 589.3,622.4 578.7,623.1ZM761.9,605.2 868.9,598.0 869.3,603.6 762.2,610.8ZM1060.8,585.2 1066.2,584.8 1066.8,590.4 1061.3,590.7ZM583.8,622.3 589.3,621.9 589.4,627.5 583.9,627.9ZM828.3,605.9 869.3,603.2 869.7,608.7 828.6,611.5ZM1056.2,590.7 1066.8,590.0 1067.3,595.5 1056.8,596.2ZM583.9,627.5 594.5,626.8 594.6,632.4 584.0,633.1ZM1056.8,595.8 1062.2,595.4 1062.8,601.0 1057.4,601.3ZM589.1,632.4 599.8,631.6 599.9,637.3 589.2,638.0ZM1052.3,601.3 1062.8,600.6 1063.4,606.1 1052.8,606.8ZM594.3,637.2 599.9,636.8 600.0,642.5 594.5,642.8ZM1052.8,606.4 1058.3,606.1 1058.8,611.6 1053.4,612.0ZM594.5,642.4 605.1,641.7 605.3,647.4 594.6,648.1ZM1048.3,611.9 1058.8,611.2 1059.4,616.8 1048.8,617.5ZM599.7,647.3 610.4,646.6 610.5,652.2 599.8,653.0ZM1048.8,617.1 1054.3,616.7 1054.9,622.3 1049.4,622.7ZM605.0,652.2 610.5,651.8 610.6,657.5 605.1,657.9ZM1044.2,622.6 1049.7,622.2 1050.3,627.9 1044.8,628.2ZM605.1,657.4 615.8,656.7 615.9,662.4 605.2,663.1ZM1039.7,628.2 1050.3,627.4 1050.8,633.1 1040.2,633.8ZM610.4,662.4 621.0,661.6 621.2,667.3 610.5,668.0ZM1040.2,633.4 1045.7,633.0 1046.3,638.6 1040.8,639.0ZM615.6,667.3 621.2,666.9 621.3,672.6 615.8,673.0ZM1035.6,638.9 1046.2,638.2 1046.8,643.8 1036.2,644.5ZM615.8,672.5 626.5,671.8 626.6,677.5 615.9,678.2ZM1036.2,644.1 1041.7,643.8 1042.2,649.4 1036.7,649.8ZM621.1,677.5 631.8,676.7 631.9,682.5 621.2,683.2ZM1031.6,649.7 1042.2,649.0 1042.8,654.6 1032.1,655.4ZM626.4,682.4 631.9,682.0 632.1,687.8 626.5,688.1ZM1032.1,654.9 1037.6,654.6 1038.2,660.2 1032.7,660.6ZM626.5,687.7 637.3,687.0 637.4,692.7 626.7,693.5ZM1027.5,660.5 1033.0,660.2 1033.6,665.9 1028.1,666.2ZM631.8,692.7 642.6,691.9 642.8,697.7 632.0,698.4ZM1022.9,666.2 1033.6,665.4 1034.1,671.1 1023.5,671.8ZM637.2,697.6 642.7,697.3 642.9,703.0 637.3,703.4ZM1023.4,671.4 1028.9,671.0 1029.5,676.8 1024.0,677.1ZM637.3,703.0 648.1,702.2 648.3,708.0 637.5,708.7ZM1018.8,677.1 1029.5,676.3 1030.0,682.0 1019.3,682.8ZM642.7,708.0 653.4,707.2 653.6,713.0 642.8,713.7ZM1019.3,682.3 1024.9,682.0 1025.4,687.7 1019.9,688.1ZM648.0,713.0 653.6,712.6 653.8,718.4 648.2,718.7ZM1014.7,688.0 1025.4,687.3 1025.9,693.0 1015.2,693.7ZM648.2,718.3 659.0,717.6 659.2,723.4 648.3,724.1ZM1015.2,693.3 1020.7,692.9 1021.3,698.7 1015.7,699.1ZM653.5,723.3 659.1,722.9 659.3,728.7 653.7,729.1ZM1010.5,699.0 1016.1,698.6 1016.7,704.4 1011.1,704.7ZM658.9,728.3 664.5,728.0 664.7,733.8 659.1,734.2ZM1005.9,704.7 1016.6,703.9 1017.2,709.7 1006.4,710.4ZM659.1,733.7 669.9,733.0 670.1,738.8 659.3,739.6ZM1006.4,710.0 1012.0,709.6 1012.5,715.4 1006.9,715.8ZM664.5,738.8 670.1,738.4 670.3,744.2 664.7,744.6ZM1001.7,715.7 1012.5,715.0 1013.0,720.8 1002.3,721.5ZM669.9,743.8 675.5,743.4 675.7,749.3 670.1,749.7ZM1002.2,721.1 1007.8,720.7 1008.4,726.5 1002.8,726.9ZM670.1,749.2 680.9,748.5 681.1,754.4 670.3,755.1ZM997.5,726.8 1008.3,726.1 1008.9,731.9 998.1,732.6ZM675.5,754.3 681.1,753.9 681.3,759.8 675.7,760.2ZM998.0,732.2 1003.6,731.8 1004.2,737.6 998.6,738.0ZM680.9,759.4 686.5,759.0 686.8,764.9 681.1,765.3ZM993.3,737.9 1004.1,737.2 1004.7,743.0 993.9,743.8ZM681.1,764.8 686.7,764.4 687.0,770.3 681.3,770.7ZM993.8,743.4 999.4,743.0 1000.0,748.8 994.4,749.2ZM989.1,749.1 994.7,748.7 995.3,754.6 989.7,755.0ZM984.4,754.9 995.2,754.2 995.8,760.0 984.9,760.8ZM953.6,762.5 990.5,760.0 991.1,765.8 954.1,768.4Z" fill="#343434" shape-rendering="crispEdges"/>
<line x1="420.0" y1="-9.4" x2="409.5" y2="1086.7" stroke="#a0a0a0" stroke-opacity="0.45" stroke-width="1"/>
<line x1="510.7" y1="-14.9" x2="520.1" y2="1078.7" stroke="#a0a0a0" stroke-opacity="0.45" stroke-width="1"/>
<line x1="601.3" y1="-20.3" x2="630.4" y2="1070.7" stroke="#a0a0a0" stroke-opacity="0.45" stroke-width="1"/>
<line x1="691.7" y1="-25.7" x2="740.5" y2="1062.8" stroke="#a0a0a0" stroke-opacity="0.45" stroke-width="1"/>
<line x1="782.0" y1="-31.1" x2="850.3" y2="1054.9" stroke="#a0a0a0" stroke-opacity="0.45" stroke-width="1"/>
<line x1="872.0" y1="-36.5" x2="959.8" y2="1047.0" stroke="#a0a0a0" stroke-opacity="0.45" stroke-width="1"/>
<line x1="961.9" y1="-41.8" x2="1069.1" y2="1039.1" stroke="#a0a0a0" stroke-opacity="0.45" stroke-width="1"/>
<line x1="1051.6" y1="-47.2" x2="1178.0" y2="1031.3" stroke="#a0a0a0" stroke-opacity="0.45" stroke-width="1"/>
<line x1="1141.1" y1="-52.6" x2="1286.8" y2="1023.5" stroke="#a0a0a0" stroke-opacity="0.45" stroke-width="1"/>
<line x1="1230.4" y1="-57.9" x2="1395.2" y2="1015.6" stroke="#a0a0a0" stroke-opacity="0.45" stroke-width="1"/>
<line x1="237.8" y1="1.5" x2="1319.5" y2="-63.2" stroke="#a0a0a0" stroke-opacity="0.45" stroke-width="1"/>
<line x1="234.0" y1="84.9" x2="1333.5" y2="18.2" stroke="#a0a0a0" stroke-opacity="0.45" stroke-width="1"/>
<line x1="230.1" y1="171.2" x2="1347.9" y2="102.3" stroke="#a0a0a0" stroke-opacity="0.45" stroke-width="1"/>
<line x1="226.0" y1="260.5" x2="1362.9" y2="189.2" stroke="#a0a0a0" stroke-opacity="0.45" stroke-width="1"/>
<line x1="221.7" y1="352.9" x2="1378.3" y2="279.2" stroke="#a0a0a0" stroke-opacity="0.45" stroke-width="1"/>
<line x1="217.4" y1="448.6" x2="1394.3" y2="372.3" stroke="#a0a0a0" stroke-opacity="0.45" stroke-width="1"/>
<line x1="212.8" y1="547.7" x2="1410.9" y2="468.8" stroke="#a0a0a0" stroke-opacity="0.45" stroke-width="1"/>
<line x1="208.1" y1="650.5" x2="1428.0" y2="568.7" stroke="#a0a0a0" stroke-opacity="0.45" stroke-width="1"/>
<line x1="203.2" y1="757.2" x2="1445.8" y2="672.4" stroke="#a0a0a0" stroke-opacity="0.45" stroke-width="1"/>
<line x1="198.2" y1="867.9" x2="1464.3" y2="780.0" stroke="#a0a0a0" stroke-opacity="0.45" stroke-width="1"/>
<line x1="192.9" y1="983.0" x2="1483.5" y2="891.7" stroke="#a0a0a0" stroke-opacity="0.45" stroke-width="1"/>
<path d="M678.2,261.9L675.0,256.1M683.2,261.6L680.1,255.7M688.3,261.2L685.3,255.4M693.3,260.9L690.4,255.0M698.4,260.6L695.6,254.6M703.4,260.2L700.7,254.2M708.5,259.9L705.9,253.8M713.5,259.6L711.0,253.5M718.6,259.2L716.2,253.1M723.6,258.9L721.4,252.7M728.7,258.6L726.5,252.3M733.7,258.2L731.7,251.9M738.8,257.9L736.9,251.6M743.8,257.6L742.0,251.2M748.9,257.2L747.2,250.8M753.9,256.9L752.4,250.5M759.0,256.6L757.6,250.1M764.1,256.2L762.7,249.7M769.1,255.9L767.9,249.4M774.2,255.5L773.1,249.0M779.2,255.2L778.3,248.7M784.3,254.9L783.4,248.3M789.3,254.5L788.6,248.0M794.4,254.2L793.8,247.6M799.4,253.9L799.0,247.3M804.5,253.5L804.2,246.9M809.5,253.2L809.3,246.6M814.6,252.9L814.5,246.3M819.6,252.5L819.7,245.9M824.7,252.2L824.9,245.6M829.7,251.9L830.1,245.3M834.8,251.5L835.3,244.9M839.8,251.2L840.4,244.6M844.9,250.8L845.6,244.3M849.9,250.5L850.8,244.0M855.0,250.2L856.0,243.6M860.0,249.8L861.1,243.3M865.1,249.5L866.3,243.0M870.1,249.2L871.5,242.7M875.2,248.8L876.6,242.4M880.2,248.5L881.8,242.1M885.3,248.2L887.0,241.8M890.3,247.8L892.1,241.5M895.4,247.5L897.3,241.2M900.4,247.1L902.5,240.9M905.5,246.8L907.6,240.6M910.5,246.5L912.8,240.3M915.6,246.1L917.9,240.0M920.6,245.8L923.1,239.7M925.7,245.5L928.2,239.4M930.7,245.1L933.4,239.1M935.8,244.8L938.5,238.8M940.8,244.4L943.7,238.5M944.2,247.3L947.2,241.3M946.0,253.3L949.0,247.4M560.1,430.3L553.8,428.4M557.6,434.8L551.3,433.0M555.2,439.3L548.8,437.6M552.7,443.8L546.3,442.2M550.3,448.3L543.8,446.8M547.8,452.8L541.4,451.5M545.4,457.3L538.9,456.1M542.9,461.8L536.4,460.7M540.5,466.3L533.9,465.3M538.0,470.8L531.5,469.9M535.6,475.3L529.0,474.5M533.1,479.8L526.6,479.1M530.7,484.3L524.1,483.7M528.2,488.8L521.6,488.3M525.8,493.3L519.2,492.9M523.3,497.8L516.7,497.5M520.9,502.3L514.3,502.1M518.4,506.8L511.8,506.7M516.0,511.2L509.4,511.3M513.5,515.7L506.9,515.9M513.8,520.1L507.2,520.3M516.7,524.3L510.1,524.6M519.7,528.5L513.1,528.9M522.6,532.7L516.0,533.2M525.6,536.9L519.0,537.5M528.5,541.1L522.0,541.8M531.5,545.3L524.9,546.1M534.4,549.5L527.9,550.4M537.4,553.7L530.8,554.7M540.3,557.9L533.8,559.0M543.3,562.1L536.8,563.3M546.2,566.3L539.8,567.7M549.2,570.5L542.7,572.0M552.1,574.7L545.7,576.3M555.1,578.9L548.7,580.6M558.0,583.1L551.7,584.9M560.9,587.3L554.6,589.2M563.9,591.5L557.6,593.5M566.8,595.7L560.6,597.8M569.8,599.9L563.6,602.2M572.7,604.1L566.6,606.5M575.7,608.3L569.6,610.8M578.6,612.5L572.6,615.1M581.6,616.7L575.6,619.4M584.5,620.9L578.6,623.7M587.5,625.1L581.6,628.0M590.4,629.2L584.6,632.4M593.4,633.4L587.6,636.7M596.3,637.6L590.6,641.0M599.3,641.8L593.6,645.3M602.2,646.0L596.6,649.6M605.1,650.2L599.7,653.9M608.1,654.4L602.7,658.2M611.0,658.6L605.7,662.5M614.0,662.8L608.7,666.8M616.9,667.0L611.8,671.1M619.9,671.2L614.8,675.4M622.8,675.4L617.8,679.7M625.8,679.6L620.9,684.0M628.7,683.8L623.9,688.3M631.7,688.0L626.9,692.6M634.6,692.2L630.0,696.9M637.5,696.4L633.0,701.2M640.5,700.6L636.0,705.5M643.4,704.8L639.1,709.8M646.4,709.0L642.1,714.1M649.3,713.2L645.2,718.3M652.3,717.4L648.2,722.6M655.2,721.6L651.2,726.9M658.2,725.8L654.3,731.2M661.1,730.0L657.3,735.4M664.0,734.2L660.4,739.7M667.0,738.4L663.4,744.0M669.9,742.6L666.4,748.2M672.9,746.8L669.5,752.5M675.8,751.0L672.5,756.7M678.8,755.2L675.6,761.0M681.7,759.4L678.6,765.3M684.7,763.6L681.6,769.5M1059.2,408.1L1065.3,405.6M1062.2,412.1L1068.4,409.7M1065.2,416.1L1071.4,413.8M1068.2,420.1L1074.4,417.9M1071.2,424.1L1077.5,422.0M1074.2,428.1L1080.5,426.1M1077.2,432.1L1083.5,430.2M1080.2,436.1L1086.6,434.3M1083.2,440.1L1089.6,438.4M1086.2,444.1L1092.6,442.5M1089.2,448.1L1095.6,446.6M1092.2,452.1L1098.7,450.7M1095.2,456.1L1101.7,454.8M1098.2,460.1L1104.7,458.9M1101.2,464.0L1107.7,463.0M1104.2,468.0L1110.7,467.1M1107.2,472.0L1113.8,471.2M1110.2,476.0L1116.8,475.3M1110.7,480.3L1117.3,479.7M1108.7,485.0L1115.3,484.4M1106.7,489.6L1113.2,489.2M1104.6,494.3L1111.2,493.9M1102.6,498.9L1109.2,498.7M1100.6,503.5L1107.2,503.4M1098.6,508.2L1105.2,508.1M1096.6,512.8L1103.2,512.9M1094.6,517.4L1101.2,517.6M1092.5,522.1L1099.1,522.4M1090.5,526.7L1097.1,527.1M1088.5,531.3L1095.1,531.9M1086.5,536.0L1093.1,536.6M1084.5,540.6L1091.0,541.4M1082.5,545.2L1089.0,546.1M1080.4,549.9L1087.0,550.9M1078.4,554.5L1084.9,555.6M1076.4,559.1L1082.9,560.4M1074.4,563.8L1080.9,565.1M1072.4,568.4L1078.8,569.9M1070.4,573.0L1076.8,574.6M1068.4,577.7L1074.7,579.4M1066.3,582.3L1072.7,584.2M1064.3,586.9L1070.6,588.9M1062.3,591.6L1068.6,593.7M1060.3,596.2L1066.5,598.4M1058.3,600.8L1064.5,603.2M1056.3,605.5L1062.4,607.9M1054.3,610.1L1060.3,612.7M1052.2,614.7L1058.3,617.4M1050.2,619.4L1056.2,622.2M1048.2,624.0L1054.1,626.9M1046.2,628.6L1052.1,631.7M1044.2,633.3L1050.0,636.4M1042.2,637.9L1047.9,641.2M1040.2,642.5L1045.8,645.9M1038.1,647.2L1043.8,650.7M1036.1,651.8L1041.7,655.4M1034.1,656.4L1039.6,660.1M1032.1,661.1L1037.5,664.9M1030.1,665.7L1035.4,669.6M1028.1,670.4L1033.3,674.3M1026.1,675.0L1031.2,679.1M1024.1,679.6L1029.2,683.8M1022.0,684.3L1027.1,688.5M1020.0,688.9L1025.0,693.3M1018.0,693.5L1022.9,698.0M1016.0,698.2L1020.8,702.7M1014.0,702.8L1018.7,707.4M1012.0,707.4L1016.6,712.1M1010.0,712.1L1014.5,716.8M1008.0,716.7L1012.4,721.5M1005.9,721.3L1010.3,726.3M1003.9,726.0L1008.3,731.0M1001.9,730.6L1006.2,735.7M999.9,735.3L1004.1,740.4M997.9,739.9L1002.0,745.1M995.9,744.5L999.9,749.8M993.9,749.2L997.8,754.5M991.8,753.8L995.7,759.2M989.8,758.4L993.6,763.8M986.2,761.0L989.9,766.5M981.1,761.5L984.7,767.0M975.9,762.0L979.5,767.6M970.8,762.5L974.2,768.1M965.6,763.0L969.0,768.7M960.4,763.5L963.7,769.2" stroke="#fff4f4" stroke-width="1.8" fill="none"/>
<path d="M676.4,258.7L675.8,257.6M681.5,258.4L680.9,257.2M686.6,258.0L686.0,256.8M691.7,257.6L691.1,256.5M696.8,257.3L696.3,256.1M701.9,256.9L701.4,255.7M707.1,256.6L706.5,255.3M712.2,256.2L711.7,255.0M717.3,255.8L716.8,254.6M722.4,255.5L721.9,254.2M727.5,255.1L727.1,253.9M732.6,254.8L732.2,253.5M737.7,254.4L737.3,253.2M742.9,254.1L742.5,252.8M748.0,253.7L747.6,252.4M753.1,253.4L752.8,252.1M758.2,253.0L757.9,251.7M763.3,252.7L763.1,251.4M768.4,252.3L768.2,251.0M773.6,252.0L773.4,250.7M778.7,251.6L778.5,250.3M783.8,251.3L783.6,250.0M788.9,250.9L788.8,249.6M794.1,250.6L793.9,249.3M799.2,250.2L799.1,248.9M804.3,249.9L804.2,248.6M809.4,249.6L809.4,248.3M814.5,249.2L814.5,247.9M819.7,248.9L819.7,247.6M824.8,248.6L824.8,247.2M829.9,248.2L830.0,246.9M835.0,247.9L835.1,246.6M840.2,247.6L840.3,246.3M845.3,247.2L845.4,245.9M850.4,246.9L850.6,245.6M855.5,246.6L855.7,245.3M860.6,246.3L860.9,245.0M865.7,245.9L866.0,244.6M870.9,245.6L871.1,244.3M876.0,245.3L876.3,244.0M881.1,245.0L881.4,243.7M886.2,244.6L886.5,243.4M891.3,244.3L891.7,243.1M896.4,244.0L896.8,242.7M901.5,243.7L902.0,242.4M906.7,243.4L907.1,242.1M911.8,243.1L912.2,241.8M916.9,242.7L917.3,241.5M922.0,242.4L922.5,241.2M927.1,242.1L927.6,240.9M932.2,241.8L932.7,240.6M937.3,241.5L937.8,240.3M942.4,241.2L943.0,240.0M945.8,244.0L946.4,242.8M947.6,250.0L948.2,248.9M556.6,429.3L555.3,428.9M554.1,433.8L552.9,433.5M551.7,438.4L550.4,438.0M549.2,442.9L547.9,442.6M546.7,447.5L545.4,447.2M544.3,452.1L543.0,451.8M541.8,456.6L540.5,456.4M539.3,461.2L538.0,461.0M536.9,465.7L535.6,465.5M534.4,470.3L533.1,470.1M532.0,474.9L530.7,474.7M529.5,479.4L528.2,479.3M527.1,484.0L525.7,483.8M524.6,488.5L523.3,488.4M522.1,493.1L520.8,493.0M519.7,497.6L518.4,497.6M517.2,502.2L515.9,502.1M514.8,506.7L513.5,506.7M512.3,511.3L511.0,511.3M509.9,515.8L508.6,515.9M510.1,520.2L508.8,520.3M513.1,524.5L511.8,524.5M516.1,528.7L514.7,528.8M519.0,533.0L517.7,533.1M522.0,537.2L520.6,537.4M524.9,541.5L523.6,541.6M527.9,545.7L526.6,545.9M530.8,550.0L529.5,550.2M533.8,554.3L532.5,554.5M536.7,558.5L535.4,558.7M539.7,562.8L538.4,563.0M542.7,567.0L541.4,567.3M545.6,571.3L544.3,571.6M548.6,575.6L547.3,575.9M551.5,579.8L550.3,580.2M554.5,584.1L553.2,584.4M557.5,588.3L556.2,588.7M560.4,592.6L559.2,593.0M563.4,596.9L562.2,597.3M566.4,601.1L565.1,601.6M569.4,605.4L568.1,605.9M572.3,609.6L571.1,610.2M575.3,613.9L574.1,614.4M578.3,618.2L577.1,618.7M581.3,622.4L580.1,623.0M584.2,626.7L583.1,627.3M587.2,631.0L586.1,631.6M590.2,635.2L589.0,635.9M593.2,639.5L592.0,640.2M596.2,643.7L595.0,644.4M599.1,648.0L598.0,648.7M602.1,652.3L601.0,653.0M605.1,656.5L604.0,657.3M608.1,660.8L607.0,661.6M611.1,665.0L610.0,665.8M614.1,669.3L613.1,670.1M617.1,673.5L616.1,674.4M620.1,677.8L619.1,678.7M623.1,682.1L622.1,682.9M626.1,686.3L625.1,687.2M629.1,690.6L628.1,691.5M632.1,694.8L631.1,695.7M635.0,699.1L634.1,700.0M638.0,703.3L637.2,704.3M641.0,707.6L640.2,708.5M644.0,711.8L643.2,712.8M647.0,716.0L646.2,717.1M650.0,720.3L649.2,721.3M653.0,724.5L652.2,725.6M656.0,728.8L655.3,729.8M659.0,733.0L658.3,734.1M662.0,737.2L661.3,738.3M665.0,741.5L664.3,742.6M668.0,745.7L667.3,746.8M671.0,749.9L670.3,751.1M674.0,754.2L673.4,755.3M677.0,758.4L676.4,759.6M680.0,762.6L679.4,763.8M683.0,766.9L682.4,768.0M1062.6,406.7L1063.8,406.2M1065.6,410.8L1066.8,410.3M1068.6,414.8L1069.9,414.4M1071.6,418.9L1072.9,418.5M1074.7,423.0L1075.9,422.5M1077.7,427.0L1078.9,426.6M1080.7,431.1L1082.0,430.7M1083.7,435.1L1085.0,434.8M1086.7,439.2L1088.0,438.8M1089.7,443.2L1091.0,442.9M1092.8,447.3L1094.0,447.0M1095.8,451.3L1097.1,451.1M1098.8,455.4L1100.1,455.1M1101.8,459.4L1103.1,459.2M1104.8,463.5L1106.1,463.3M1107.8,467.5L1109.1,467.3M1110.8,471.6L1112.1,471.4M1113.8,475.6L1115.1,475.5M1114.3,480.0L1115.6,479.9M1112.3,484.7L1113.6,484.6M1110.3,489.4L1111.6,489.3M1108.3,494.1L1109.6,494.0M1106.3,498.8L1107.6,498.7M1104.2,503.5L1105.6,503.4M1102.2,508.1L1103.5,508.1M1100.2,512.8L1101.5,512.9M1098.2,517.5L1099.5,517.6M1096.2,522.2L1097.5,522.3M1094.2,526.9L1095.5,527.0M1092.1,531.6L1093.4,531.7M1090.1,536.3L1091.4,536.5M1088.1,541.0L1089.4,541.2M1086.1,545.7L1087.4,545.9M1084.0,550.4L1085.3,550.6M1082.0,555.1L1083.3,555.3M1080.0,559.8L1081.3,560.1M1078.0,564.5L1079.2,564.8M1075.9,569.2L1077.2,569.5M1073.9,573.9L1075.2,574.2M1071.9,578.6L1073.1,579.0M1069.8,583.3L1071.1,583.7M1067.8,588.0L1069.1,588.4M1065.8,592.7L1067.0,593.1M1063.7,597.4L1065.0,597.9M1061.7,602.1L1062.9,602.6M1059.6,606.8L1060.9,607.3M1057.6,611.5L1058.8,612.0M1055.6,616.2L1056.8,616.8M1053.5,620.9L1054.7,621.5M1051.5,625.6L1052.7,626.2M1049.4,630.3L1050.6,630.9M1047.4,635.0L1048.5,635.6M1045.3,639.7L1046.5,640.4M1043.3,644.4L1044.4,645.1M1041.2,649.1L1042.4,649.8M1039.2,653.8L1040.3,654.5M1037.1,658.5L1038.2,659.2M1035.1,663.2L1036.2,663.9M1033.0,667.9L1034.1,668.6M1031.0,672.5L1032.0,673.3M1028.9,677.2L1030.0,678.1M1026.9,681.9L1027.9,682.8M1024.8,686.6L1025.8,687.5M1022.8,691.3L1023.7,692.2M1020.7,696.0L1021.7,696.9M1018.6,700.7L1019.6,701.6M1016.6,705.3L1017.5,706.3M1014.5,710.0L1015.5,711.0M1012.5,714.7L1013.4,715.6M1010.4,719.4L1011.3,720.3M1008.4,724.0L1009.2,725.0M1006.3,728.7L1007.2,729.7M1004.2,733.4L1005.1,734.4M1002.2,738.1L1003.0,739.1M1000.1,742.7L1001.0,743.8M998.1,747.4L998.9,748.5M996.0,752.1L996.8,753.1M994.0,756.7L994.7,757.8M991.9,761.4L992.7,762.5M988.3,764.0L989.0,765.1M983.1,764.5L983.8,765.6M977.9,765.1L978.6,766.2M972.7,765.6L973.3,766.7M967.4,766.1L968.1,767.3M962.2,766.6L962.9,767.8" stroke="#ff3030" stroke-width="1.2" stroke-opacity="0.8" fill="none"/>
<polyline points="767.7,608.9 866.4,602.8" fill="none" stroke="#f4eeee" stroke-width="5.5" stroke-linejoin="round" stroke-linecap="butt"/>
<polygon points="705.5,472.1 708.2,471.8 710.8,471.5 713.5,471.3 716.2,471.0 718.8,470.7 721.5,470.4 724.2,470.1 727.1,469.7 729.4,468.6 731.3,467.6 733.2,466.7 735.1,465.7 737.0,464.7 738.9,463.7 740.8,462.8 743.0,461.5 744.7,459.8 746.1,458.4 747.5,457.0 748.8,455.6 750.2,454.1 751.5,452.7 752.8,451.2 754.4,449.5 755.4,447.5 756.2,445.9 756.9,444.3 757.7,442.7 758.4,441.1 759.1,439.4 759.8,437.8 760.7,435.8 760.9,433.6 761.0,431.9 761.1,430.1 761.2,428.4 761.2,426.6 761.3,424.9 761.3,423.2 761.4,421.2 760.9,419.1 760.4,417.3 760.0,415.5 759.5,413.7 759.0,411.9 758.5,410.0 758.2,408.2 757.9,406.3 756.7,406.5 757.0,408.4 757.4,410.2 757.6,412.1 757.7,414.0 757.9,415.9 758.1,417.7 758.2,419.6 758.4,421.3 758.0,422.8 757.7,424.5 757.3,426.2 757.0,427.9 756.7,429.6 756.4,431.3 756.1,433.0 755.8,434.3 755.1,435.5 754.3,437.0 753.4,438.6 752.6,440.1 751.7,441.7 750.9,443.3 750.1,444.8 749.5,446.1 748.4,447.2 747.1,448.6 745.8,450.1 744.5,451.6 743.2,453.1 741.9,454.5 740.6,456.0 739.6,457.2 738.2,458.2 736.3,459.3 734.5,460.4 732.7,461.6 731.0,462.8 729.2,463.9 727.4,465.1 725.9,466.2 723.6,466.7 721.0,467.3 718.4,467.9 715.8,468.5 713.1,469.1 710.5,469.7 707.9,470.3 705.3,470.9" fill="#f4eeee"/>
<polygon points="877.5,387.6 876.9,389.1 876.2,390.5 875.5,392.0 874.9,393.4 874.2,394.9 873.5,396.3 872.9,397.8 872.2,399.4 871.8,401.0 871.5,402.5 871.2,403.9 870.9,405.4 870.6,406.8 870.3,408.3 870.0,409.7 869.7,411.7 870.1,413.8 870.4,415.4 870.7,417.0 871.1,418.6 871.4,420.2 871.8,421.8 872.2,423.4 872.7,425.4 873.8,427.5 874.8,429.3 875.7,431.2 876.7,433.0 877.7,434.8 878.8,436.7 879.8,438.5 881.0,440.7 882.8,442.4 884.3,443.8 885.8,445.3 887.3,446.7 888.8,448.1 890.3,449.5 891.8,450.9 893.7,452.6 896.1,453.5 898.2,454.2 900.2,454.9 902.2,455.6 904.3,456.2 906.3,456.9 908.3,457.6 910.6,458.3 913.5,458.3 916.1,458.2 918.8,458.1 921.4,458.0 924.1,457.9 926.7,457.9 929.3,458.0 932.0,458.0 932.0,456.8 929.4,456.8 926.7,456.7 924.1,456.6 921.4,456.4 918.8,456.2 916.2,456.0 913.5,455.9 911.1,455.7 909.4,454.8 907.5,453.9 905.5,453.0 903.6,452.1 901.7,451.2 899.7,450.3 897.8,449.4 896.2,448.8 895.2,447.5 893.8,446.0 892.4,444.5 891.0,443.0 889.6,441.4 888.2,439.9 886.8,438.4 885.7,437.2 884.9,435.7 884.0,433.9 883.0,432.0 882.0,430.2 881.0,428.3 880.0,426.5 879.0,424.7 878.2,423.1 877.9,421.9 877.4,420.3 877.0,418.8 876.5,417.2 876.1,415.6 875.6,414.0 875.1,412.5 874.7,411.4 874.8,410.4 874.9,408.9 875.0,407.4 875.1,406.0 875.2,404.5 875.3,403.0 875.4,401.5 875.4,400.2 875.8,398.8 876.2,397.3 876.6,395.8 877.0,394.2 877.4,392.7 877.8,391.1 878.3,389.6 878.7,388.0" fill="#f4eeee"/>
<path d="M799.6,605.2h1v1h-1zM789.8,608.2h1v1h-1zM824.6,604.9h1v1h-1zM848.1,602.3h1v1h-1zM824.4,605.5h1v1h-1zM839.6,603.4h1v1h-1zM779.3,607.8h1v1h-1zM833.7,606.1h1v1h-1zM854.0,602.6h1v1h-1zM833.1,602.7h1v1h-1zM831.7,607.4h1v1h-1zM795.8,606.6h1v1h-1zM779.1,606.0h1v1h-1zM822.0,607.4h1v1h-1zM803.2,608.6h1v1h-1zM790.7,607.4h1v1h-1zM804.2,607.0h1v1h-1zM835.8,604.8h1v1h-1zM834.3,602.6h1v1h-1zM844.8,606.0h1v1h-1zM779.9,609.9h1v1h-1zM864.3,604.7h1v1h-1zM843.9,604.3h1v1h-1zM800.2,605.5h1v1h-1zM865.0,604.6h1v1h-1zM860.3,605.6h1v1h-1zM787.0,606.3h1v1h-1zM833.0,606.9h1v1h-1zM845.5,603.3h1v1h-1zM780.1,606.4h1v1h-1zM847.2,602.2h1v1h-1zM859.8,602.9h1v1h-1zM796.5,605.8h1v1h-1zM785.6,605.3h1v1h-1zM784.7,607.7h1v1h-1zM843.9,604.2h1v1h-1zM815.0,608.2h1v1h-1zM823.0,607.7h1v1h-1zM833.8,606.2h1v1h-1zM783.0,609.0h1v1h-1zM781.9,609.9h1v1h-1zM815.9,608.4h1v1h-1zM838.8,602.1h1v1h-1zM865.0,604.3h1v1h-1zM809.5,608.4h1v1h-1zM793.1,605.6h1v1h-1zM775.0,610.6h1v1h-1zM846.7,601.9h1v1h-1zM801.2,607.1h1v1h-1zM849.9,604.8h1v1h-1zM780.4,606.0h1v1h-1zM850.8,605.6h1v1h-1zM793.8,609.6h1v1h-1zM821.6,604.3h1v1h-1zM841.8,605.1h1v1h-1zM864.7,601.1h1v1h-1zM831.0,602.7h1v1h-1zM855.7,604.1h1v1h-1zM817.6,607.5h1v1h-1zM849.3,604.3h1v1h-1zM778.2,609.9h1v1h-1zM829.7,605.7h1v1h-1zM715.5,468.2h1v1h-1zM719.1,467.8h1v1h-1zM720.6,468.0h1v1h-1zM715.6,470.4h1v1h-1zM708.4,470.2h1v1h-1zM706.6,470.6h1v1h-1zM715.3,470.9h1v1h-1zM725.2,467.2h1v1h-1zM708.4,471.1h1v1h-1zM725.1,468.9h1v1h-1zM725.8,469.3h1v1h-1zM736.5,463.7h1v1h-1zM737.3,461.5h1v1h-1zM731.3,464.4h1v1h-1zM740.6,458.9h1v1h-1zM730.5,465.9h1v1h-1zM727.1,466.8h1v1h-1zM728.4,466.9h1v1h-1zM741.2,460.8h1v1h-1zM726.1,466.4h1v1h-1zM739.7,460.2h1v1h-1zM726.3,467.6h1v1h-1zM739.3,461.9h1v1h-1zM734.6,464.0h1v1h-1zM749.4,451.3h1v1h-1zM749.0,449.7h1v1h-1zM744.3,456.8h1v1h-1zM747.3,455.0h1v1h-1zM745.1,457.5h1v1h-1zM747.9,450.8h1v1h-1zM751.2,447.7h1v1h-1zM743.1,456.1h1v1h-1zM744.8,454.2h1v1h-1zM746.5,455.7h1v1h-1zM758.0,439.2h1v1h-1zM753.1,443.1h1v1h-1zM755.3,437.6h1v1h-1zM750.9,446.7h1v1h-1zM754.3,444.8h1v1h-1zM753.4,443.1h1v1h-1zM755.2,439.6h1v1h-1zM757.9,438.8h1v1h-1zM756.3,442.4h1v1h-1zM760.3,424.0h1v1h-1zM758.3,430.6h1v1h-1zM757.4,433.8h1v1h-1zM758.6,427.3h1v1h-1zM759.3,429.3h1v1h-1zM760.6,424.8h1v1h-1zM758.8,427.2h1v1h-1zM759.8,433.1h1v1h-1zM758.5,430.5h1v1h-1zM758.2,427.9h1v1h-1zM760.1,428.6h1v1h-1zM757.5,433.3h1v1h-1zM759.5,417.4h1v1h-1zM758.5,417.1h1v1h-1zM760.0,414.9h1v1h-1zM758.0,416.0h1v1h-1zM757.8,418.5h1v1h-1zM760.0,421.0h1v1h-1zM756.2,408.0h1v1h-1zM759.2,417.0h1v1h-1zM759.6,419.6h1v1h-1zM873.8,398.5h1v1h-1zM875.3,392.3h1v1h-1zM876.3,390.5h1v1h-1zM877.7,388.2h1v1h-1zM875.4,395.0h1v1h-1zM877.0,391.6h1v1h-1zM877.7,393.6h1v1h-1zM876.8,394.0h1v1h-1zM877.3,394.4h1v1h-1zM877.0,388.6h1v1h-1zM870.8,409.6h1v1h-1zM873.5,409.5h1v1h-1zM871.5,405.4h1v1h-1zM872.6,401.6h1v1h-1zM874.2,400.7h1v1h-1zM874.6,402.1h1v1h-1zM873.2,407.3h1v1h-1zM872.7,406.3h1v1h-1zM872.0,400.8h1v1h-1zM876.0,420.6h1v1h-1zM872.6,414.9h1v1h-1zM872.7,414.4h1v1h-1zM874.0,413.1h1v1h-1zM874.6,414.5h1v1h-1zM874.5,418.6h1v1h-1zM872.3,417.5h1v1h-1zM881.7,437.8h1v1h-1zM874.5,424.9h1v1h-1zM876.2,424.6h1v1h-1zM879.9,435.0h1v1h-1zM876.6,428.1h1v1h-1zM881.8,435.0h1v1h-1zM878.8,428.7h1v1h-1zM879.9,433.8h1v1h-1zM883.3,438.6h1v1h-1zM891.1,447.4h1v1h-1zM892.9,446.6h1v1h-1zM886.8,443.9h1v1h-1zM894.7,448.4h1v1h-1zM892.5,449.6h1v1h-1zM885.4,439.2h1v1h-1zM894.5,450.3h1v1h-1zM894.3,448.1h1v1h-1zM889.1,444.7h1v1h-1zM893.6,448.2h1v1h-1zM887.3,441.6h1v1h-1zM890.0,443.9h1v1h-1zM883.6,440.6h1v1h-1zM901.5,452.9h1v1h-1zM898.5,451.3h1v1h-1zM903.1,453.5h1v1h-1zM906.7,456.2h1v1h-1zM908.2,456.5h1v1h-1zM897.7,451.6h1v1h-1zM899.5,453.2h1v1h-1zM900.6,451.8h1v1h-1zM907.0,454.1h1v1h-1zM896.7,451.0h1v1h-1zM901.0,454.1h1v1h-1zM898.3,452.8h1v1h-1zM907.0,456.2h1v1h-1zM919.7,458.1h1v1h-1zM922.4,456.1h1v1h-1zM923.0,457.4h1v1h-1zM921.7,457.7h1v1h-1zM921.9,456.9h1v1h-1zM927.0,456.1h1v1h-1zM916.5,456.2h1v1h-1zM913.6,458.0h1v1h-1zM924.3,457.2h1v1h-1zM924.3,458.3h1v1h-1zM919.9,457.6h1v1h-1zM918.5,458.5h1v1h-1z" fill="#a89c9c"/>
<path d="M774.9,608.7h1v1h-1zM773.4,608.6h1v1h-1zM810.4,604.1h1v1h-1zM809.7,607.9h1v1h-1zM772.4,610.4h1v1h-1zM781.8,606.1h1v1h-1zM830.7,604.4h1v1h-1zM773.8,606.4h1v1h-1zM834.8,604.4h1v1h-1zM825.5,605.1h1v1h-1zM846.1,605.0h1v1h-1zM782.7,607.9h1v1h-1zM826.4,605.7h1v1h-1zM850.7,606.0h1v1h-1zM769.9,608.6h1v1h-1zM780.4,606.9h1v1h-1zM853.5,601.5h1v1h-1zM852.9,602.5h1v1h-1zM782.5,606.4h1v1h-1zM793.5,604.9h1v1h-1zM806.4,606.0h1v1h-1zM830.2,602.9h1v1h-1zM788.2,606.0h1v1h-1zM772.8,606.1h1v1h-1zM777.7,607.6h1v1h-1zM854.0,604.1h1v1h-1zM792.6,606.6h1v1h-1zM813.7,606.0h1v1h-1zM777.8,607.5h1v1h-1zM849.4,602.2h1v1h-1zM861.5,603.2h1v1h-1zM821.2,603.3h1v1h-1zM793.4,606.7h1v1h-1zM848.5,605.1h1v1h-1zM818.7,605.0h1v1h-1zM770.4,607.7h1v1h-1zM836.2,606.9h1v1h-1zM803.6,605.3h1v1h-1zM856.6,605.1h1v1h-1zM832.2,606.4h1v1h-1zM841.7,604.2h1v1h-1zM863.5,602.4h1v1h-1zM861.2,604.2h1v1h-1zM864.5,603.7h1v1h-1zM821.7,603.7h1v1h-1zM863.5,603.7h1v1h-1zM849.1,602.4h1v1h-1zM793.3,606.9h1v1h-1zM857.4,602.6h1v1h-1zM825.4,607.3h1v1h-1zM858.2,603.3h1v1h-1zM819.2,603.3h1v1h-1zM822.6,604.6h1v1h-1zM822.6,606.9h1v1h-1zM822.9,604.2h1v1h-1zM842.8,606.3h1v1h-1zM828.1,605.2h1v1h-1zM836.0,604.4h1v1h-1zM854.3,605.7h1v1h-1zM781.1,606.2h1v1h-1zM774.8,607.2h1v1h-1zM789.5,609.8h1v1h-1zM783.6,607.6h1v1h-1zM801.1,605.3h1v1h-1zM811.0,603.8h1v1h-1zM829.3,605.2h1v1h-1zM778.0,607.1h1v1h-1zM844.5,603.0h1v1h-1zM824.1,606.4h1v1h-1zM773.5,609.5h1v1h-1zM774.4,610.3h1v1h-1zM794.0,605.4h1v1h-1zM791.1,605.5h1v1h-1zM772.6,607.1h1v1h-1zM797.9,608.3h1v1h-1zM816.9,604.3h1v1h-1zM769.4,607.6h1v1h-1zM840.0,604.7h1v1h-1zM814.7,608.2h1v1h-1zM848.5,603.6h1v1h-1zM850.0,603.3h1v1h-1zM835.7,607.1h1v1h-1zM807.6,605.7h1v1h-1zM792.8,605.7h1v1h-1zM795.5,605.9h1v1h-1zM812.9,604.4h1v1h-1zM798.2,606.3h1v1h-1zM805.4,606.5h1v1h-1zM787.5,607.7h1v1h-1zM793.7,605.3h1v1h-1zM771.7,606.3h1v1h-1zM790.7,607.9h1v1h-1zM854.4,603.0h1v1h-1zM847.7,602.2h1v1h-1zM835.1,605.7h1v1h-1zM770.7,606.9h1v1h-1zM721.2,468.8h1v1h-1zM710.5,469.3h1v1h-1zM726.0,468.0h1v1h-1zM718.5,469.8h1v1h-1zM711.9,470.7h1v1h-1zM720.1,469.6h1v1h-1zM716.3,469.6h1v1h-1zM708.1,472.4h1v1h-1zM726.3,469.4h1v1h-1zM714.8,469.2h1v1h-1zM708.4,472.1h1v1h-1zM724.2,469.0h1v1h-1zM724.4,468.2h1v1h-1zM705.5,471.5h1v1h-1zM711.6,469.3h1v1h-1zM712.3,471.5h1v1h-1zM721.4,469.9h1v1h-1zM711.5,470.1h1v1h-1zM726.5,468.2h1v1h-1zM714.3,469.3h1v1h-1zM707.7,472.2h1v1h-1zM725.0,467.3h1v1h-1zM716.0,468.7h1v1h-1zM735.0,463.8h1v1h-1zM735.7,461.8h1v1h-1zM739.6,459.0h1v1h-1zM731.1,465.5h1v1h-1zM728.5,465.5h1v1h-1zM739.9,460.2h1v1h-1zM740.7,461.6h1v1h-1zM728.1,465.9h1v1h-1zM730.9,463.9h1v1h-1zM737.5,461.3h1v1h-1zM734.1,463.1h1v1h-1zM738.8,459.8h1v1h-1zM730.0,465.5h1v1h-1zM729.6,464.7h1v1h-1zM746.3,454.2h1v1h-1zM747.7,451.5h1v1h-1zM741.5,457.1h1v1h-1zM747.3,452.4h1v1h-1zM746.5,451.3h1v1h-1zM750.7,449.1h1v1h-1zM743.5,454.8h1v1h-1zM748.3,451.4h1v1h-1zM749.4,452.6h1v1h-1zM741.3,458.6h1v1h-1zM749.2,450.8h1v1h-1zM745.5,456.9h1v1h-1zM742.7,456.6h1v1h-1zM749.5,452.6h1v1h-1zM741.8,456.8h1v1h-1zM754.0,442.8h1v1h-1zM751.6,444.9h1v1h-1zM755.5,443.9h1v1h-1zM757.2,435.1h1v1h-1zM758.1,437.8h1v1h-1zM752.2,447.1h1v1h-1zM756.9,435.6h1v1h-1zM756.3,435.7h1v1h-1zM757.9,437.8h1v1h-1zM753.3,443.4h1v1h-1zM756.5,435.1h1v1h-1zM753.7,442.5h1v1h-1zM756.3,442.1h1v1h-1zM759.9,424.4h1v1h-1zM757.3,431.5h1v1h-1zM761.3,423.0h1v1h-1zM757.1,433.7h1v1h-1zM759.3,425.2h1v1h-1zM759.6,433.5h1v1h-1zM757.8,432.2h1v1h-1zM760.9,426.2h1v1h-1zM758.3,422.2h1v1h-1zM760.6,427.1h1v1h-1zM757.5,408.4h1v1h-1zM759.3,409.5h1v1h-1zM758.7,412.3h1v1h-1zM757.8,416.0h1v1h-1zM757.8,418.5h1v1h-1zM757.1,411.4h1v1h-1zM760.3,418.1h1v1h-1zM758.5,420.5h1v1h-1zM758.9,413.0h1v1h-1zM760.1,418.7h1v1h-1zM759.3,416.6h1v1h-1zM759.8,414.8h1v1h-1zM757.5,408.2h1v1h-1zM758.9,415.7h1v1h-1zM756.4,407.1h1v1h-1zM872.6,398.6h1v1h-1zM876.6,388.0h1v1h-1zM876.5,389.4h1v1h-1zM878.2,390.3h1v1h-1zM876.2,394.2h1v1h-1zM876.9,387.9h1v1h-1zM875.8,392.8h1v1h-1zM874.9,397.2h1v1h-1zM877.3,393.9h1v1h-1zM877.5,393.4h1v1h-1zM874.4,406.0h1v1h-1zM871.7,404.0h1v1h-1zM872.3,401.5h1v1h-1zM873.6,409.5h1v1h-1zM873.3,410.7h1v1h-1zM873.6,405.8h1v1h-1zM871.4,407.6h1v1h-1zM873.8,409.2h1v1h-1zM872.2,404.3h1v1h-1zM875.1,424.2h1v1h-1zM874.8,421.2h1v1h-1zM873.6,419.1h1v1h-1zM873.7,411.2h1v1h-1zM874.4,419.3h1v1h-1zM876.2,422.6h1v1h-1zM875.8,419.4h1v1h-1zM874.6,415.7h1v1h-1zM872.5,414.2h1v1h-1zM871.3,413.6h1v1h-1zM874.1,422.8h1v1h-1zM871.7,415.0h1v1h-1zM874.2,418.2h1v1h-1zM875.1,425.5h1v1h-1zM878.5,433.0h1v1h-1zM876.7,427.3h1v1h-1zM879.6,434.2h1v1h-1zM878.4,428.5h1v1h-1zM878.4,431.5h1v1h-1zM878.3,427.0h1v1h-1zM877.4,428.2h1v1h-1zM881.6,435.9h1v1h-1zM879.2,434.4h1v1h-1zM883.8,436.4h1v1h-1zM879.9,435.1h1v1h-1zM881.0,435.0h1v1h-1zM876.7,427.5h1v1h-1zM883.6,437.1h1v1h-1zM875.0,426.5h1v1h-1zM877.9,425.6h1v1h-1zM892.9,450.7h1v1h-1zM886.6,440.5h1v1h-1zM892.6,448.9h1v1h-1zM886.1,440.9h1v1h-1zM884.1,438.6h1v1h-1zM892.0,447.0h1v1h-1zM891.6,445.1h1v1h-1zM887.8,444.7h1v1h-1zM891.4,447.3h1v1h-1zM886.5,439.8h1v1h-1zM891.1,449.0h1v1h-1zM885.5,441.1h1v1h-1zM892.2,448.5h1v1h-1zM895.9,452.4h1v1h-1zM898.7,452.0h1v1h-1zM900.7,452.4h1v1h-1zM904.6,453.2h1v1h-1zM909.4,455.5h1v1h-1zM897.8,450.6h1v1h-1zM900.1,452.8h1v1h-1zM907.3,456.4h1v1h-1zM897.9,452.3h1v1h-1zM898.4,451.7h1v1h-1zM902.8,454.2h1v1h-1zM897.1,451.9h1v1h-1zM906.3,456.6h1v1h-1zM903.8,455.1h1v1h-1zM925.2,457.7h1v1h-1zM917.5,457.5h1v1h-1zM924.2,456.5h1v1h-1zM920.5,457.6h1v1h-1zM925.1,458.7h1v1h-1zM924.7,458.2h1v1h-1zM921.2,458.7h1v1h-1zM930.7,457.5h1v1h-1zM915.3,457.7h1v1h-1zM918.4,455.7h1v1h-1zM919.3,455.6h1v1h-1zM919.7,457.8h1v1h-1zM930.7,457.5h1v1h-1zM927.8,457.0h1v1h-1zM915.6,458.6h1v1h-1zM920.8,456.5h1v1h-1zM913.5,458.1h1v1h-1zM928.8,456.6h1v1h-1zM916.2,456.9h1v1h-1zM910.9,457.7h1v1h-1zM916.1,456.5h1v1h-1z" fill="#e82020"/>
<circle cx="815.9" cy="509.2" r="10" fill="#4d4dd0"/>
<line x1="812.1" y1="480.8" x2="812.1" y2="497" stroke="#60d060" stroke-width="1" stroke-opacity="0.8"/>
<line x1="820.8" y1="490.2" x2="820.8" y2="499" stroke="#60d060" stroke-width="1" stroke-opacity="0.8"/>
<line x1="821" y1="500" x2="832.8" y2="499.2" stroke="#e06060" stroke-width="1" stroke-opacity="0.8"/>
<line x1="825" y1="509" x2="841.5" y2="508.6" stroke="#e06060" stroke-width="1" stroke-opacity="0.8"/>
<line x1="816" y1="520" x2="834.7" y2="518.9" stroke="#e06060" stroke-width="1" stroke-opacity="0.8"/>
<line x1="815.5" y1="508.6" x2="836" y2="507.8" stroke="#ee0000" stroke-width="3"/>
<line x1="815" y1="508" x2="814.7" y2="488.2" stroke="#00dd00" stroke-width="2.4"/>
<circle cx="813" cy="498.5" r="1.4" fill="#1a1a80"/>
<circle cx="814" cy="519" r="1.4" fill="#1a1a80"/>
<circle cx="815.5" cy="508.5" r="1.4" fill="#1a1a80"/>
<circle cx="821" cy="508.5" r="1.4" fill="#1a1a80"/>
</svg>
</body></html>
